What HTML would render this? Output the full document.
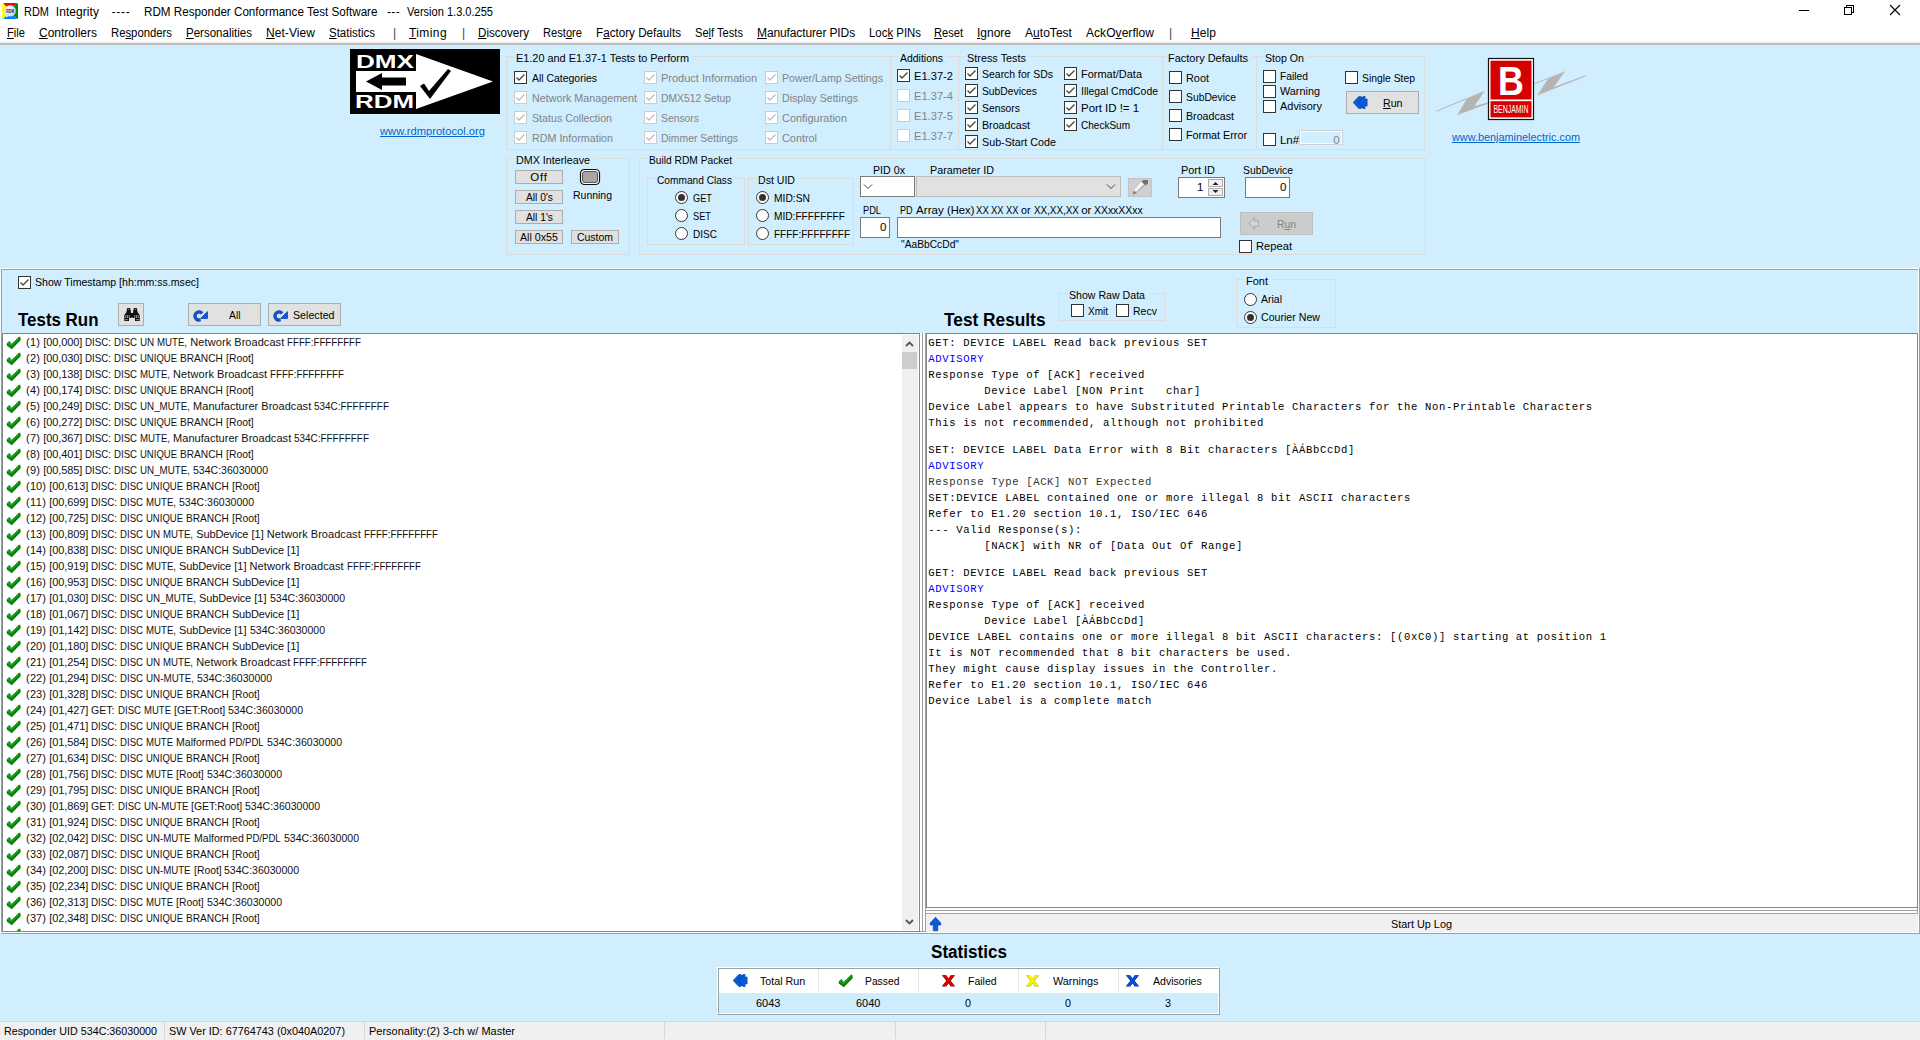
<!DOCTYPE html>
<html><head><meta charset="utf-8"><title>RDM Integrity</title>
<style>
html,body{margin:0;padding:0}
body{width:1920px;height:1040px;overflow:hidden;background:#d1eefe;position:relative;font-family:"Liberation Sans", sans-serif;font-size:11px;color:#000}
div,span.t,svg.a{position:absolute}
div{box-sizing:content-box}
span.t{white-space:pre;height:16px;line-height:16px;font-family:"Liberation Sans", sans-serif}
span.m{font-family:"Liberation Mono", monospace}
u{text-decoration:underline;text-underline-offset:1px}
</style></head><body>
<div style="left:0px;top:0px;width:1920px;height:23px;background:#fff"></div>
<svg class="a" style="left:2px;top:3px" width="16" height="16" viewBox="0 0 16 16">

<g><path d="M1 0H15L8 8Z" fill="#ff0000"/><path d="M16 1V15L8 8Z M15 0L16 1L8 8Z M15 16L16 15L8 8Z" fill="#008a00"/><path d="M15 16H1L8 8Z" fill="#0080ff"/><path d="M0 15V1L8 8Z M1 0L0 1L8 8Z M1 16L0 15L8 8Z" fill="#ffff00"/></g>
<path d="M2 9.2L4.6 14.6L8 11Z" fill="#fff"/>
<circle cx="8.2" cy="7.8" r="5.5" fill="#d4e4f6" stroke="#b4bcdc" stroke-width="0.5"/>
<ellipse cx="7" cy="5.6" rx="3.4" ry="2" fill="#f4f8fd"/>
<text x="8.2" y="10.1" font-family="Liberation Sans" font-size="5.2" font-weight="bold" text-anchor="middle" fill="#333" textLength="8" lengthAdjust="spacingAndGlyphs">RDM</text>
</svg>
<span class="t" style="left:23.5px;top:4px;font-size:12px;transform:scaleX(0.9148);transform-origin:0 50%;">RDM</span>
<span class="t" style="left:55.8px;top:4px;font-size:12px;letter-spacing:0.057px;">Integrity</span>
<span class="t" style="left:111.5px;top:4px;font-size:12px;letter-spacing:0.754px;">----</span>
<span class="t" style="left:143.5px;top:4px;font-size:12px;transform:scaleX(0.9706);transform-origin:0 50%;">RDM Responder Conformance Test Software</span>
<span class="t" style="left:387px;top:4px;font-size:12px;letter-spacing:0.333px;">---</span>
<span class="t" style="left:407px;top:4px;font-size:12px;transform:scaleX(0.9207);transform-origin:0 50%;">Version 1.3.0.255</span>
<svg class="a" style="left:1790px;top:-1px" width="130" height="23" viewBox="0 0 130 23" shape-rendering="crispEdges">
<path d="M9 11.5H19" stroke="#000" stroke-width="1" fill="none"/>
<path d="M54.5 8.5H61.5V15.5H54.5Z M56.5 8.5V6.5H63.5V13.5H61.5" stroke="#000" stroke-width="1" fill="none"/>
<path d="M100 6L110 16M110 6L100 16" stroke="#000" stroke-width="1.1" fill="none" shape-rendering="auto"/>
</svg>
<div style="left:0px;top:23px;width:1920px;height:18px;background:#fff"></div>
<div style="left:0px;top:41px;width:1920px;height:1px;background:#f4f4f4"></div>
<div style="left:0px;top:42px;width:1920px;height:1px;background:#f0f0f0"></div>
<div style="left:0px;top:43px;width:1920px;height:2px;background:#bcbcbc"></div>
<span class="t" style="left:7px;top:25px;font-size:12px;transform:scaleX(0.9298);transform-origin:0 50%;"><u>F</u>ile</span>
<span class="t" style="left:39px;top:25px;font-size:12px;"><u>C</u>ontrollers</span>
<span class="t" style="left:111px;top:25px;font-size:12px;transform:scaleX(0.9425);transform-origin:0 50%;">Re<u>s</u>ponders</span>
<span class="t" style="left:186px;top:25px;font-size:12px;transform:scaleX(0.9604);transform-origin:0 50%;"><u>P</u>ersonalities</span>
<span class="t" style="left:266px;top:25px;font-size:12px;letter-spacing:0.066px;"><u>N</u>et-View</span>
<span class="t" style="left:329px;top:25px;font-size:12px;transform:scaleX(0.9577);transform-origin:0 50%;"><u>S</u>tatistics</span>
<span class="t" style="left:393px;top:25px;font-size:12px;color:#444;">|</span>
<span class="t" style="left:409px;top:25px;font-size:12px;letter-spacing:0.404px;"><u>T</u>iming</span>
<span class="t" style="left:462px;top:25px;font-size:12px;color:#444;">|</span>
<span class="t" style="left:478px;top:25px;font-size:12px;transform:scaleX(0.9680);transform-origin:0 50%;"><u>D</u>iscovery</span>
<span class="t" style="left:543px;top:25px;font-size:12px;transform:scaleX(0.9275);transform-origin:0 50%;">Rest<u>o</u>re</span>
<span class="t" style="left:596px;top:25px;font-size:12px;transform:scaleX(0.9726);transform-origin:0 50%;">F<u>a</u>ctory Defaults</span>
<span class="t" style="left:695px;top:25px;font-size:12px;transform:scaleX(0.9261);transform-origin:0 50%;">Se<u>l</u>f Tests</span>
<span class="t" style="left:757px;top:25px;font-size:12px;letter-spacing:-0.120px;"><u>M</u>anufacturer PIDs</span>
<span class="t" style="left:869px;top:25px;font-size:12px;transform:scaleX(0.9506);transform-origin:0 50%;">Loc<u>k</u> PINs</span>
<span class="t" style="left:934px;top:25px;font-size:12px;transform:scaleX(0.9248);transform-origin:0 50%;"><u>R</u>eset</span>
<span class="t" style="left:977px;top:25px;font-size:12px;letter-spacing:-0.008px;"><u>I</u>gnore</span>
<span class="t" style="left:1025px;top:25px;font-size:12px;letter-spacing:0.035px;">A<u>u</u>toTest</span>
<span class="t" style="left:1086px;top:25px;font-size:12px;letter-spacing:0.058px;">AckO<u>v</u>erflow</span>
<span class="t" style="left:1169px;top:25px;font-size:12px;color:#444;">|</span>
<span class="t" style="left:1191px;top:25px;font-size:12px;letter-spacing:0.078px;"><u>H</u>elp</span>
<svg class="a" style="left:350px;top:49px" width="150" height="65" viewBox="0 0 150 65">
<rect width="150" height="65" fill="#000"/>
<path d="M6 22H66V5L143 32.5L66 60V43H6Z" fill="#fff"/>
<path d="M16 32.5L32 24V28.5H56V36.5H32V41Z" fill="#000"/>
<path d="M70 37L74 34.5L79 42L98 20L101 22L80 50Z" fill="#000"/>
<text x="6" y="19" font-family="Liberation Sans" font-weight="bold" font-size="17.5" fill="#fff" textLength="58" lengthAdjust="spacingAndGlyphs">DMX</text>
<text x="5" y="59" font-family="Liberation Sans" font-weight="bold" font-size="17.5" fill="#fff" textLength="59" lengthAdjust="spacingAndGlyphs">RDM</text>
</svg>
<span class="t" style="left:380px;top:123px;font-size:11.5px;color:#0066cc;transform:scaleX(0.9721);transform-origin:0 50%;text-decoration:underline;">www.rdmprotocol.org</span>
<div style="left:506px;top:56px;width:385px;height:94px;border:1px solid #dcdcdc;box-sizing:border-box"></div>
<div style="left:514px;top:56px;width:179px;height:1px;background:#d1eefe"></div>
<span class="t" style="left:516px;top:50px;font-size:11.5px;transform:scaleX(0.9473);transform-origin:0 50%;">E1.20 and E1.37-1 Tests to Perform</span>
<div style="left:514px;top:71px;width:11px;height:11px;border:1px solid #333;background:#fff"><svg width="11" height="11" viewBox="0 0 11 11" style="position:absolute;left:0;top:0"><path d="M1.5 5.5 L4 8 L9.5 2.5" fill="none" stroke="#444" stroke-width="1.3"/></svg></div>
<span class="t" style="left:532px;top:70px;font-size:11.5px;transform:scaleX(0.9079);transform-origin:0 50%;">All Categories</span>
<div style="left:514px;top:91px;width:11px;height:11px;border:1px solid #cccccc;background:#fff"><svg width="11" height="11" viewBox="0 0 11 11" style="position:absolute;left:0;top:0"><path d="M1.5 5.5 L4 8 L9.5 2.5" fill="none" stroke="#bdbdbd" stroke-width="1.3"/></svg></div>
<span class="t" style="left:532px;top:90px;font-size:11.5px;color:#838383;transform:scaleX(0.9333);transform-origin:0 50%;">Network Management</span>
<div style="left:514px;top:111px;width:11px;height:11px;border:1px solid #cccccc;background:#fff"><svg width="11" height="11" viewBox="0 0 11 11" style="position:absolute;left:0;top:0"><path d="M1.5 5.5 L4 8 L9.5 2.5" fill="none" stroke="#bdbdbd" stroke-width="1.3"/></svg></div>
<span class="t" style="left:532px;top:110px;font-size:11.5px;color:#838383;transform:scaleX(0.9270);transform-origin:0 50%;">Status Collection</span>
<div style="left:514px;top:131px;width:11px;height:11px;border:1px solid #cccccc;background:#fff"><svg width="11" height="11" viewBox="0 0 11 11" style="position:absolute;left:0;top:0"><path d="M1.5 5.5 L4 8 L9.5 2.5" fill="none" stroke="#bdbdbd" stroke-width="1.3"/></svg></div>
<span class="t" style="left:532px;top:130px;font-size:11.5px;color:#838383;transform:scaleX(0.9319);transform-origin:0 50%;">RDM Information</span>
<div style="left:644px;top:71px;width:11px;height:11px;border:1px solid #cccccc;background:#fff"><svg width="11" height="11" viewBox="0 0 11 11" style="position:absolute;left:0;top:0"><path d="M1.5 5.5 L4 8 L9.5 2.5" fill="none" stroke="#bdbdbd" stroke-width="1.3"/></svg></div>
<span class="t" style="left:661px;top:70px;font-size:11.5px;color:#838383;transform:scaleX(0.9566);transform-origin:0 50%;">Product Information</span>
<div style="left:644px;top:91px;width:11px;height:11px;border:1px solid #cccccc;background:#fff"><svg width="11" height="11" viewBox="0 0 11 11" style="position:absolute;left:0;top:0"><path d="M1.5 5.5 L4 8 L9.5 2.5" fill="none" stroke="#bdbdbd" stroke-width="1.3"/></svg></div>
<span class="t" style="left:661px;top:90px;font-size:11.5px;color:#838383;transform:scaleX(0.8974);transform-origin:0 50%;">DMX512 Setup</span>
<div style="left:644px;top:111px;width:11px;height:11px;border:1px solid #cccccc;background:#fff"><svg width="11" height="11" viewBox="0 0 11 11" style="position:absolute;left:0;top:0"><path d="M1.5 5.5 L4 8 L9.5 2.5" fill="none" stroke="#bdbdbd" stroke-width="1.3"/></svg></div>
<span class="t" style="left:661px;top:110px;font-size:11.5px;color:#838383;transform:scaleX(0.9007);transform-origin:0 50%;">Sensors</span>
<div style="left:644px;top:131px;width:11px;height:11px;border:1px solid #cccccc;background:#fff"><svg width="11" height="11" viewBox="0 0 11 11" style="position:absolute;left:0;top:0"><path d="M1.5 5.5 L4 8 L9.5 2.5" fill="none" stroke="#bdbdbd" stroke-width="1.3"/></svg></div>
<span class="t" style="left:661px;top:130px;font-size:11.5px;color:#838383;transform:scaleX(0.9059);transform-origin:0 50%;">Dimmer Settings</span>
<div style="left:765px;top:71px;width:11px;height:11px;border:1px solid #cccccc;background:#fff"><svg width="11" height="11" viewBox="0 0 11 11" style="position:absolute;left:0;top:0"><path d="M1.5 5.5 L4 8 L9.5 2.5" fill="none" stroke="#bdbdbd" stroke-width="1.3"/></svg></div>
<span class="t" style="left:782px;top:70px;font-size:11.5px;color:#838383;transform:scaleX(0.9240);transform-origin:0 50%;">Power/Lamp Settings</span>
<div style="left:765px;top:91px;width:11px;height:11px;border:1px solid #cccccc;background:#fff"><svg width="11" height="11" viewBox="0 0 11 11" style="position:absolute;left:0;top:0"><path d="M1.5 5.5 L4 8 L9.5 2.5" fill="none" stroke="#bdbdbd" stroke-width="1.3"/></svg></div>
<span class="t" style="left:782px;top:90px;font-size:11.5px;color:#838383;transform:scaleX(0.9216);transform-origin:0 50%;">Display Settings</span>
<div style="left:765px;top:111px;width:11px;height:11px;border:1px solid #cccccc;background:#fff"><svg width="11" height="11" viewBox="0 0 11 11" style="position:absolute;left:0;top:0"><path d="M1.5 5.5 L4 8 L9.5 2.5" fill="none" stroke="#bdbdbd" stroke-width="1.3"/></svg></div>
<span class="t" style="left:782px;top:110px;font-size:11.5px;color:#838383;transform:scaleX(0.9502);transform-origin:0 50%;">Configuration</span>
<div style="left:765px;top:131px;width:11px;height:11px;border:1px solid #cccccc;background:#fff"><svg width="11" height="11" viewBox="0 0 11 11" style="position:absolute;left:0;top:0"><path d="M1.5 5.5 L4 8 L9.5 2.5" fill="none" stroke="#bdbdbd" stroke-width="1.3"/></svg></div>
<span class="t" style="left:782px;top:130px;font-size:11.5px;color:#838383;transform:scaleX(0.9440);transform-origin:0 50%;">Control</span>
<div style="left:890px;top:56px;width:69px;height:94px;border:1px solid #dcdcdc;box-sizing:border-box"></div>
<div style="left:898px;top:56px;width:49px;height:1px;background:#d1eefe"></div>
<span class="t" style="left:900px;top:50px;font-size:11.5px;transform:scaleX(0.9089);transform-origin:0 50%;">Additions</span>
<div style="left:897px;top:69px;width:11px;height:11px;border:1px solid #333;background:#fff"><svg width="11" height="11" viewBox="0 0 11 11" style="position:absolute;left:0;top:0"><path d="M1.5 5.5 L4 8 L9.5 2.5" fill="none" stroke="#444" stroke-width="1.3"/></svg></div>
<span class="t" style="left:914px;top:68px;font-size:11.5px;transform:scaleX(0.9682);transform-origin:0 50%;">E1.37-2</span>
<div style="left:897px;top:89px;width:11px;height:11px;border:1px solid #cccccc;background:#fff"></div>
<span class="t" style="left:914px;top:88px;font-size:11.5px;color:#838383;transform:scaleX(0.9682);transform-origin:0 50%;">E1.37-4</span>
<div style="left:897px;top:109px;width:11px;height:11px;border:1px solid #cccccc;background:#fff"></div>
<span class="t" style="left:914px;top:108px;font-size:11.5px;color:#838383;transform:scaleX(0.9682);transform-origin:0 50%;">E1.37-5</span>
<div style="left:897px;top:129px;width:11px;height:11px;border:1px solid #cccccc;background:#fff"></div>
<span class="t" style="left:914px;top:128px;font-size:11.5px;color:#838383;transform:scaleX(0.9682);transform-origin:0 50%;">E1.37-7</span>
<div style="left:958px;top:56px;width:205px;height:94px;border:1px solid #dcdcdc;box-sizing:border-box"></div>
<div style="left:965px;top:56px;width:65px;height:1px;background:#d1eefe"></div>
<span class="t" style="left:967px;top:50px;font-size:11.5px;transform:scaleX(0.9452);transform-origin:0 50%;">Stress Tests</span>
<div style="left:965px;top:67px;width:11px;height:11px;border:1px solid #333;background:#fff"><svg width="11" height="11" viewBox="0 0 11 11" style="position:absolute;left:0;top:0"><path d="M1.5 5.5 L4 8 L9.5 2.5" fill="none" stroke="#444" stroke-width="1.3"/></svg></div>
<span class="t" style="left:982px;top:66px;font-size:11.5px;transform:scaleX(0.9104);transform-origin:0 50%;">Search for SDs</span>
<div style="left:965px;top:84px;width:11px;height:11px;border:1px solid #333;background:#fff"><svg width="11" height="11" viewBox="0 0 11 11" style="position:absolute;left:0;top:0"><path d="M1.5 5.5 L4 8 L9.5 2.5" fill="none" stroke="#444" stroke-width="1.3"/></svg></div>
<span class="t" style="left:982px;top:83px;font-size:11.5px;transform:scaleX(0.8961);transform-origin:0 50%;">SubDevices</span>
<div style="left:965px;top:101px;width:11px;height:11px;border:1px solid #333;background:#fff"><svg width="11" height="11" viewBox="0 0 11 11" style="position:absolute;left:0;top:0"><path d="M1.5 5.5 L4 8 L9.5 2.5" fill="none" stroke="#444" stroke-width="1.3"/></svg></div>
<span class="t" style="left:982px;top:100px;font-size:11.5px;transform:scaleX(0.9007);transform-origin:0 50%;">Sensors</span>
<div style="left:965px;top:118px;width:11px;height:11px;border:1px solid #333;background:#fff"><svg width="11" height="11" viewBox="0 0 11 11" style="position:absolute;left:0;top:0"><path d="M1.5 5.5 L4 8 L9.5 2.5" fill="none" stroke="#444" stroke-width="1.3"/></svg></div>
<span class="t" style="left:982px;top:117px;font-size:11.5px;transform:scaleX(0.9270);transform-origin:0 50%;">Broadcast</span>
<div style="left:965px;top:135px;width:11px;height:11px;border:1px solid #333;background:#fff"><svg width="11" height="11" viewBox="0 0 11 11" style="position:absolute;left:0;top:0"><path d="M1.5 5.5 L4 8 L9.5 2.5" fill="none" stroke="#444" stroke-width="1.3"/></svg></div>
<span class="t" style="left:982px;top:134px;font-size:11.5px;transform:scaleX(0.9336);transform-origin:0 50%;">Sub-Start Code</span>
<div style="left:1064px;top:67px;width:11px;height:11px;border:1px solid #333;background:#fff"><svg width="11" height="11" viewBox="0 0 11 11" style="position:absolute;left:0;top:0"><path d="M1.5 5.5 L4 8 L9.5 2.5" fill="none" stroke="#444" stroke-width="1.3"/></svg></div>
<span class="t" style="left:1081px;top:66px;font-size:11.5px;transform:scaleX(0.9543);transform-origin:0 50%;">Format/Data</span>
<div style="left:1064px;top:84px;width:11px;height:11px;border:1px solid #333;background:#fff"><svg width="11" height="11" viewBox="0 0 11 11" style="position:absolute;left:0;top:0"><path d="M1.5 5.5 L4 8 L9.5 2.5" fill="none" stroke="#444" stroke-width="1.3"/></svg></div>
<span class="t" style="left:1081px;top:83px;font-size:11.5px;transform:scaleX(0.9057);transform-origin:0 50%;">Illegal CmdCode</span>
<div style="left:1064px;top:101px;width:11px;height:11px;border:1px solid #333;background:#fff"><svg width="11" height="11" viewBox="0 0 11 11" style="position:absolute;left:0;top:0"><path d="M1.5 5.5 L4 8 L9.5 2.5" fill="none" stroke="#444" stroke-width="1.3"/></svg></div>
<span class="t" style="left:1081px;top:100px;font-size:11.5px;letter-spacing:-0.040px;">Port ID != 1</span>
<div style="left:1064px;top:118px;width:11px;height:11px;border:1px solid #333;background:#fff"><svg width="11" height="11" viewBox="0 0 11 11" style="position:absolute;left:0;top:0"><path d="M1.5 5.5 L4 8 L9.5 2.5" fill="none" stroke="#444" stroke-width="1.3"/></svg></div>
<span class="t" style="left:1081px;top:117px;font-size:11.5px;transform:scaleX(0.8711);transform-origin:0 50%;">CheckSum</span>
<div style="left:1162px;top:56px;width:95px;height:94px;border:1px solid #dcdcdc;box-sizing:border-box"></div>
<div style="left:1166px;top:56px;width:86px;height:1px;background:#d1eefe"></div>
<span class="t" style="left:1168px;top:50px;font-size:11.5px;transform:scaleX(0.9554);transform-origin:0 50%;">Factory Defaults</span>
<div style="left:1169px;top:71px;width:11px;height:11px;border:1px solid #333;background:#fff"></div>
<span class="t" style="left:1186px;top:70px;font-size:11.5px;transform:scaleX(0.9466);transform-origin:0 50%;">Root</span>
<div style="left:1169px;top:90px;width:11px;height:11px;border:1px solid #333;background:#fff"></div>
<span class="t" style="left:1186px;top:89px;font-size:11.5px;transform:scaleX(0.8989);transform-origin:0 50%;">SubDevice</span>
<div style="left:1169px;top:109px;width:11px;height:11px;border:1px solid #333;background:#fff"></div>
<span class="t" style="left:1186px;top:108px;font-size:11.5px;transform:scaleX(0.9270);transform-origin:0 50%;">Broadcast</span>
<div style="left:1169px;top:128px;width:11px;height:11px;border:1px solid #333;background:#fff"></div>
<span class="t" style="left:1186px;top:127px;font-size:11.5px;transform:scaleX(0.9360);transform-origin:0 50%;">Format Error</span>
<div style="left:1256px;top:56px;width:169px;height:94px;border:1px solid #dcdcdc;box-sizing:border-box"></div>
<div style="left:1263px;top:56px;width:45px;height:1px;background:#d1eefe"></div>
<span class="t" style="left:1265px;top:50px;font-size:11.5px;transform:scaleX(0.9241);transform-origin:0 50%;">Stop On</span>
<div style="left:1263px;top:70px;width:11px;height:11px;border:1px solid #333;background:#fff"></div>
<span class="t" style="left:1280px;top:68px;font-size:11.5px;transform:scaleX(0.8938);transform-origin:0 50%;">Failed</span>
<div style="left:1263px;top:85px;width:11px;height:11px;border:1px solid #333;background:#fff"></div>
<span class="t" style="left:1280px;top:83px;font-size:11.5px;transform:scaleX(0.9433);transform-origin:0 50%;">Warning</span>
<div style="left:1263px;top:100px;width:11px;height:11px;border:1px solid #333;background:#fff"></div>
<span class="t" style="left:1280px;top:98px;font-size:11.5px;transform:scaleX(0.9522);transform-origin:0 50%;">Advisory</span>
<div style="left:1263px;top:133px;width:11px;height:11px;border:1px solid #333;background:#fff"></div>
<span class="t" style="left:1280px;top:131.5px;font-size:11.5px;letter-spacing:-0.062px;">Ln#</span>
<div style="left:1299px;top:130px;width:44px;height:15px;background:#d1eefe;border:1px solid #d2d2d2;box-shadow:inset 0 0 0 1px #fff;box-sizing:border-box"></div>
<span class="t" style="left:1333.3px;top:131.5px;font-size:11.5px;color:#838383;">0</span>
<div style="left:1345px;top:71px;width:11px;height:11px;border:1px solid #333;background:#fff"></div>
<span class="t" style="left:1362px;top:69.5px;font-size:11.5px;transform:scaleX(0.9009);transform-origin:0 50%;">Single Step</span>
<div style="left:1346px;top:91px;width:73px;height:23px;background:#e1e1e1;border:1px solid #adadad;box-sizing:border-box"></div>
<svg class="a" style="left:1353px;top:96px" width="15" height="13" viewBox="0 0 15 13"><path d="M0 6.5L6 0.2H7.9L9.1 2.1L10.3 0.2H12.1V3H14.2V10H12.1V12.8H10.3L9.1 10.9L7.9 12.8H6Z" fill="#0a5ad8" stroke="#0a3cb4" stroke-width="0.5"/><path d="M10.3 0.8L4.8 6.5L10.3 12.2" fill="none" stroke="#0a3cb4" stroke-width="0.9"/></svg>
<span class="t" style="left:1383.3px;top:95px;font-size:11.5px;transform:scaleX(0.9238);transform-origin:0 50%;"><u>R</u>un</span>
<svg class="a" style="left:1434px;top:56px" width="156" height="68" viewBox="0 0 156 68">
<path d="M2.4 55.1L51 34.5L40.5 50.3L53.7 46.8L55 47.6L23 59.3L32.5 42.9Z" fill="#b4b4b4" stroke="#e4e4e4" stroke-width="0.5" stroke-dasharray="1.5 1"/>
<path d="M100.2 27.6L131.4 14.9L119.8 31.3L151.5 19.5L151.8 20.3L102.9 39.8L114 22.8Z" fill="#b4b4b4" stroke="#e4e4e4" stroke-width="0.5" stroke-dasharray="1.5 1"/>
<path d="M2.4 55.3L32.5 42.7M40.5 50.6L54 47M100.2 27.8L114 22.4M119.8 31.6L151.5 19.9" fill="none" stroke="#b4b4b4" stroke-width="0.9"/>
<rect x="54.5" y="2.5" width="45" height="61" fill="#fff" stroke="#111" stroke-width="1.2"/>
<rect x="56.5" y="4.7" width="41" height="38.8" fill="#d60000"/>
<rect x="56.5" y="45.2" width="41" height="16.2" fill="#d60000"/>
<text transform="translate(77,38.8) scale(0.885,1)" font-family="Liberation Sans" font-weight="bold" font-size="40.5" fill="#fff" text-anchor="middle">B</text>
<text x="59.5" y="56.8" font-family="Liberation Sans" font-size="10.2" fill="#fff" textLength="35" lengthAdjust="spacingAndGlyphs">BENJAMIN</text>
</svg>
<span class="t" style="left:1452px;top:129px;font-size:11.5px;color:#0066cc;transform:scaleX(0.9446);transform-origin:0 50%;text-decoration:underline;">www.benjaminelectric.com</span>
<div style="left:506px;top:158px;width:124px;height:97px;border:1px solid #dcdcdc;box-sizing:border-box"></div>
<div style="left:514px;top:158px;width:80px;height:1px;background:#d1eefe"></div>
<span class="t" style="left:516px;top:152px;font-size:11.5px;transform:scaleX(0.9336);transform-origin:0 50%;">DMX Interleave</span>
<div style="left:515px;top:170px;width:48px;height:14px;background:#e1e1e1;border:1px solid #adadad;box-sizing:border-box"></div>
<span class="t" style="left:530.25px;top:169.0px;font-size:11.5px;letter-spacing:0.786px;">Off</span>
<div style="left:515px;top:190px;width:48px;height:14px;background:#e1e1e1;border:1px solid #adadad;box-sizing:border-box"></div>
<span class="t" style="left:525.5px;top:189.0px;font-size:11.5px;transform:scaleX(0.8903);transform-origin:0 50%;">All 0&#x27;s</span>
<div style="left:515px;top:210px;width:48px;height:14px;background:#e1e1e1;border:1px solid #adadad;box-sizing:border-box"></div>
<span class="t" style="left:525.5px;top:209.0px;font-size:11.5px;transform:scaleX(0.8903);transform-origin:0 50%;">All 1&#x27;s</span>
<div style="left:515px;top:230px;width:48px;height:14px;background:#e1e1e1;border:1px solid #adadad;box-sizing:border-box"></div>
<span class="t" style="left:520.0px;top:229.0px;font-size:11.5px;transform:scaleX(0.9286);transform-origin:0 50%;">All 0x55</span>
<div style="left:571px;top:230px;width:48px;height:14px;background:#e1e1e1;border:1px solid #adadad;box-sizing:border-box"></div>
<span class="t" style="left:577.0px;top:229.0px;font-size:11.5px;transform:scaleX(0.9085);transform-origin:0 50%;">Custom</span>
<svg class="a" style="left:579px;top:168px" width="22" height="18" viewBox="0 0 22 18">
<rect x="1.5" y="1.5" width="19" height="15" rx="4" ry="4" fill="#fff" stroke="#111" stroke-width="1.2"/>
<rect x="3.5" y="3.5" width="15" height="11" rx="2.5" ry="2.5" fill="#a6a6a6" stroke="#555" stroke-width="1"/>
</svg>
<span class="t" style="left:573px;top:187px;font-size:11.5px;transform:scaleX(0.9103);transform-origin:0 50%;">Running</span>
<div style="left:639px;top:158px;width:787px;height:97px;border:1px solid #dcdcdc;box-sizing:border-box"></div>
<div style="left:647px;top:158px;width:89px;height:1px;background:#d1eefe"></div>
<span class="t" style="left:649px;top:152px;font-size:11.5px;transform:scaleX(0.8895);transform-origin:0 50%;">Build RDM Packet</span>
<div style="left:647px;top:178px;width:98px;height:67px;border:1px solid #dcdcdc;box-sizing:border-box"></div>
<div style="left:655px;top:178px;width:81px;height:1px;background:#d1eefe"></div>
<span class="t" style="left:657px;top:172px;font-size:11.5px;transform:scaleX(0.8824);transform-origin:0 50%;">Command Class</span>
<div style="left:675px;top:191.0px;width:11px;height:11px;border:1px solid #333;border-radius:50%;background:#fff"><div style="left:2px;top:2px;width:7px;height:7px;border-radius:50%;background:#333"></div></div>
<span class="t" style="left:692.6px;top:189.5px;font-size:11.5px;transform:scaleX(0.8037);transform-origin:0 50%;">GET</span>
<div style="left:675px;top:209.0px;width:11px;height:11px;border:1px solid #333;border-radius:50%;background:#fff"></div>
<span class="t" style="left:692.6px;top:207.5px;font-size:11.5px;transform:scaleX(0.8045);transform-origin:0 50%;">SET</span>
<div style="left:675px;top:227.0px;width:11px;height:11px;border:1px solid #333;border-radius:50%;background:#fff"></div>
<span class="t" style="left:692.6px;top:225.5px;font-size:11.5px;transform:scaleX(0.8732);transform-origin:0 50%;">DISC</span>
<div style="left:748px;top:178px;width:106px;height:67px;border:1px solid #dcdcdc;box-sizing:border-box"></div>
<div style="left:756px;top:178px;width:43px;height:1px;background:#d1eefe"></div>
<span class="t" style="left:758px;top:172px;font-size:11.5px;transform:scaleX(0.9193);transform-origin:0 50%;">Dst UID</span>
<div style="left:756px;top:191.0px;width:11px;height:11px;border:1px solid #333;border-radius:50%;background:#fff"><div style="left:2px;top:2px;width:7px;height:7px;border-radius:50%;background:#333"></div></div>
<span class="t" style="left:773.7px;top:189.5px;font-size:11.5px;transform:scaleX(0.8944);transform-origin:0 50%;">MID:SN</span>
<div style="left:756px;top:209.0px;width:11px;height:11px;border:1px solid #333;border-radius:50%;background:#fff"></div>
<span class="t" style="left:773.7px;top:207.5px;font-size:11.5px;transform:scaleX(0.8822);transform-origin:0 50%;">MID:FFFFFFFF</span>
<div style="left:756px;top:227.0px;width:11px;height:11px;border:1px solid #333;border-radius:50%;background:#fff"></div>
<span class="t" style="left:773.7px;top:225.5px;font-size:11.5px;transform:scaleX(0.8686);transform-origin:0 50%;">FFFF:FFFFFFFF</span>
<span class="t" style="left:873px;top:162px;font-size:11.5px;transform:scaleX(0.9271);transform-origin:0 50%;">PID 0x</span>
<div style="left:860px;top:176px;width:55px;height:21px;background:#fff;border:1px solid #7a7a7a;box-sizing:border-box"></div>
<svg class="a" style="left:863px;top:183px" width="10" height="7" viewBox="0 0 10 7"><path d="M1 1.5L5 5.5L9 1.5" fill="none" stroke="#444" stroke-width="1"/></svg>
<span class="t" style="left:930px;top:162px;font-size:11.5px;transform:scaleX(0.9358);transform-origin:0 50%;">Parameter ID</span>
<div style="left:916px;top:176px;width:205px;height:21px;background:#e1e1e1;border:1px solid #bcbcbc;box-sizing:border-box"></div>
<svg class="a" style="left:1106px;top:183px" width="10" height="7" viewBox="0 0 10 7"><path d="M1 1.5L5 5.5L9 1.5" fill="none" stroke="#444" stroke-width="1"/></svg>
<div style="left:1128px;top:178px;width:24px;height:19px;background:#cfcfcf;border:1px solid #c4c4c4;box-sizing:border-box"></div>
<svg class="a" style="left:1131px;top:179px" width="19" height="17" viewBox="0 0 19 17">
<path d="M3 11.5L10.5 2.5L14.5 6.5L6 14Z" fill="#f6f6f6"/>
<path d="M6 14L14.5 6.5L13 5.3L4.8 13Z" fill="#b4b4b4"/>
<path d="M1.3 15.7L3 11.5L6 14Z" fill="#808080"/>
<path d="M10.5 2.5L12.5 1H17V4.6L14.5 6.5Z" fill="#707070"/>
</svg>
<span class="t" style="left:1181px;top:162px;font-size:11.5px;transform:scaleX(0.9498);transform-origin:0 50%;">Port ID</span>
<div style="left:1178px;top:177px;width:47px;height:21px;background:#fff;border:1px solid #7a7a7a;box-sizing:border-box"></div>
<span class="t" style="left:1197px;top:179px;font-size:11.5px;">1</span>
<div style="left:1208px;top:179px;width:15px;height:8px;background:#f0f0f0;border:1px solid #adadad;box-sizing:border-box"></div>
<div style="left:1208px;top:188px;width:15px;height:8px;background:#f0f0f0;border:1px solid #adadad;box-sizing:border-box"></div>
<svg class="a" style="left:1212px;top:181px" width="7" height="13" viewBox="0 0 7 13"><path d="M0.5 4L3.5 1L6.5 4Z M0.5 9L3.5 12L6.5 9Z" fill="#222"/></svg>
<span class="t" style="left:1242.5px;top:162px;font-size:11.5px;transform:scaleX(0.8989);transform-origin:0 50%;">SubDevice</span>
<div style="left:1245px;top:177px;width:45px;height:21px;background:#fff;border:1px solid #7a7a7a;box-sizing:border-box"></div>
<span class="t" style="left:1280px;top:179px;font-size:11.5px;">0</span>
<span class="t" style="left:863px;top:202px;font-size:11.5px;transform:scaleX(0.8045);transform-origin:0 50%;">PDL</span>
<div style="left:860px;top:217px;width:30px;height:21px;background:#fff;border:1px solid #7a7a7a;box-sizing:border-box"></div>
<span class="t" style="left:880px;top:219px;font-size:11.5px;">0</span>
<span class="t" style="left:899.8px;top:202px;font-size:11.5px;transform:scaleX(0.7945);transform-origin:0 50%;">PD</span>
<span class="t" style="left:916.1px;top:202px;font-size:11.5px;letter-spacing:0.023px;">Array</span>
<span class="t" style="left:946.5px;top:202px;font-size:11.5px;transform:scaleX(0.9742);transform-origin:0 50%;">(Hex)</span>
<span class="t" style="left:976.0px;top:202px;font-size:11.5px;transform:scaleX(0.8342);transform-origin:0 50%;">XX</span>
<span class="t" style="left:991.1999999999999px;top:202px;font-size:11.5px;transform:scaleX(0.8212);transform-origin:0 50%;">XX</span>
<span class="t" style="left:1006.1px;top:202px;font-size:11.5px;transform:scaleX(0.8147);transform-origin:0 50%;">XX</span>
<span class="t" style="left:1021.4px;top:202px;font-size:11.5px;transform:scaleX(0.9380);transform-origin:0 50%;">or</span>
<span class="t" style="left:1033.9px;top:202px;font-size:11.5px;transform:scaleX(0.8546);transform-origin:0 50%;">XX,XX,XX</span>
<span class="t" style="left:1081.3000000000002px;top:202px;font-size:11.5px;letter-spacing:-0.117px;">or</span>
<span class="t" style="left:1094.1000000000001px;top:202px;font-size:11.5px;transform:scaleX(0.9052);transform-origin:0 50%;">XXxxXXxx</span>
<div style="left:897px;top:217px;width:324px;height:21px;background:#fff;border:1px solid #7a7a7a;box-sizing:border-box"></div>
<span class="t" style="left:901px;top:236px;font-size:11.5px;transform:scaleX(0.8915);transform-origin:0 50%;">&quot;AaBbCcDd&quot;</span>
<div style="left:1240px;top:212px;width:73px;height:23px;background:#cccccc;border:1px solid #bfbfbf;box-sizing:border-box"></div>
<svg class="a" style="left:1248px;top:216px" width="12" height="15" viewBox="0 0 12 15"><path d="M1 7.5L6.5 1.5V5H10.5V10H6.5V13.5Z" fill="#d4d4d4" stroke="#a8a8a8" stroke-width="1"/></svg>
<span class="t" style="left:1277px;top:216px;font-size:11.5px;color:#838383;transform:scaleX(0.8994);transform-origin:0 50%;">R<u>u</u>n</span>
<div style="left:1239px;top:240px;width:11px;height:11px;border:1px solid #333;background:#fff"></div>
<span class="t" style="left:1256px;top:238px;font-size:11.5px;transform:scaleX(0.9705);transform-origin:0 50%;">Repeat</span>
<div style="left:0px;top:268px;width:1919px;height:1px;background:#fff"></div>
<div style="left:0px;top:268px;width:1px;height:666px;background:#f4fbff"></div>
<div style="left:1px;top:269px;width:1917px;height:1px;background:#a0a0a0"></div>
<div style="left:1px;top:269px;width:1px;height:665px;background:#a0a0a0"></div>
<div style="left:1918px;top:268px;width:1px;height:665px;background:#fff"></div>
<div style="left:1919px;top:268px;width:1px;height:666px;background:#a0a0a0"></div>
<div style="left:1px;top:932px;width:1918px;height:1px;background:#fff"></div>
<div style="left:1px;top:933px;width:1919px;height:1px;background:#a0a0a0"></div>
<div style="left:18px;top:276px;width:11px;height:11px;border:1px solid #333;background:#fff"><svg width="11" height="11" viewBox="0 0 11 11" style="position:absolute;left:0;top:0"><path d="M1.5 5.5 L4 8 L9.5 2.5" fill="none" stroke="#444" stroke-width="1.3"/></svg></div>
<span class="t" style="left:35px;top:274px;font-size:11.5px;transform:scaleX(0.9198);transform-origin:0 50%;">Show Timestamp [hh:mm:ss.msec]</span>
<span class="t" style="left:18.3px;top:311.6px;font-size:18px;font-weight:bold;transform:scaleX(0.9395);transform-origin:0 50%;">Tests Run</span>
<div style="left:118px;top:303px;width:26px;height:23px;background:#e1e1e1;border:1px solid #adadad;box-sizing:border-box"></div>
<svg class="a" style="left:124px;top:308px" width="16" height="13" viewBox="0 0 16 13">
<g fill="#111"><path d="M3 0H6.3V2H6.8V4L7.6 6.5V10H5V13H0.3V7L2.6 4V2H3Z"/><path d="M13 0H9.7V2H9.2V4L8.4 6.5V10H11V13H15.7V7L13.4 4V2H13Z"/><rect x="7" y="5" width="2" height="4"/></g>
<g fill="#8c8c8c"><rect x="1.3" y="7" width="1" height="3"/><rect x="3" y="7" width="1" height="3"/><rect x="4.7" y="7" width="1" height="3"/><rect x="10.3" y="7" width="1" height="3"/><rect x="12" y="7" width="1" height="3"/><rect x="13.7" y="7" width="1" height="3"/>
<rect x="1.3" y="11" width="2.4" height="1.2"/><rect x="12.3" y="11" width="2.4" height="1.2"/><rect x="3.8" y="0.8" width="1.4" height="1"/><rect x="10.8" y="0.8" width="1.4" height="1"/></g>
</svg>
<div style="left:188px;top:303px;width:73px;height:23px;background:#e1e1e1;border:1px solid #adadad;box-sizing:border-box"></div>
<svg class="a" style="left:193px;top:309.5px" width="15" height="12" viewBox="-0.5 -0.5 15 12"><path d="M6.9 9.3A4 4 0 1 1 8.6 2.9" fill="none" stroke="#0a3cb4" stroke-width="3.2"/><path d="M6.9 9.3A4 4 0 1 1 8.6 2.9" fill="none" stroke="#0a5ad8" stroke-width="2"/><path d="M14 1V8H7Z" fill="#0a5ad8" stroke="#0a3cb4" stroke-width="0.7"/></svg>
<span class="t" style="left:228.5px;top:307px;font-size:11.5px;transform:scaleX(0.8998);transform-origin:0 50%;">All</span>
<div style="left:268px;top:303px;width:73px;height:23px;background:#e1e1e1;border:1px solid #adadad;box-sizing:border-box"></div>
<svg class="a" style="left:273px;top:309.5px" width="15" height="12" viewBox="-0.5 -0.5 15 12"><path d="M6.9 9.3A4 4 0 1 1 8.6 2.9" fill="none" stroke="#0a3cb4" stroke-width="3.2"/><path d="M6.9 9.3A4 4 0 1 1 8.6 2.9" fill="none" stroke="#0a5ad8" stroke-width="2"/><path d="M14 1V8H7Z" fill="#0a5ad8" stroke="#0a3cb4" stroke-width="0.7"/></svg>
<span class="t" style="left:293.3px;top:307px;font-size:11.5px;transform:scaleX(0.9271);transform-origin:0 50%;">Selected</span>
<span class="t" style="left:944.3px;top:311.6px;font-size:18px;font-weight:bold;transform:scaleX(0.9602);transform-origin:0 50%;">Test Results</span>
<div style="left:1059px;top:293px;width:106px;height:28px;border:1px solid #dcdcdc;box-sizing:border-box"></div>
<div style="left:1067px;top:293px;width:82px;height:1px;background:#d1eefe"></div>
<span class="t" style="left:1069px;top:287px;font-size:11.5px;transform:scaleX(0.9216);transform-origin:0 50%;">Show Raw Data</span>
<div style="left:1071px;top:304px;width:11px;height:11px;border:1px solid #333;background:#fff"></div>
<span class="t" style="left:1088px;top:303px;font-size:11.5px;transform:scaleX(0.8696);transform-origin:0 50%;">Xmit</span>
<div style="left:1116px;top:304px;width:11px;height:11px;border:1px solid #333;background:#fff"></div>
<span class="t" style="left:1133px;top:303px;font-size:11.5px;transform:scaleX(0.9159);transform-origin:0 50%;">Recv</span>
<div style="left:1236px;top:279px;width:100px;height:49px;border:1px solid #dcdcdc;box-sizing:border-box"></div>
<div style="left:1244px;top:279px;width:28px;height:1px;background:#d1eefe"></div>
<span class="t" style="left:1246px;top:273px;font-size:11.5px;transform:scaleX(0.9559);transform-origin:0 50%;">Font</span>
<div style="left:1244px;top:292.5px;width:11px;height:11px;border:1px solid #333;border-radius:50%;background:#fff"></div>
<span class="t" style="left:1261px;top:291px;font-size:11.5px;transform:scaleX(0.9124);transform-origin:0 50%;">Arial</span>
<div style="left:1244px;top:310.5px;width:11px;height:11px;border:1px solid #333;border-radius:50%;background:#fff"><div style="left:2px;top:2px;width:7px;height:7px;border-radius:50%;background:#333"></div></div>
<span class="t" style="left:1261px;top:309px;font-size:11.5px;transform:scaleX(0.9230);transform-origin:0 50%;">Courier New</span>
<div style="left:2px;top:333px;width:918px;height:599px;background:#fff;border:1px solid #828790;box-sizing:border-box"></div>
<svg class="a" style="left:6px;top:336px" width="15" height="14" viewBox="0 0 15 14"><path d="M0.8 7.6L3.2 4.9L5.6 7.9L13.2 0.4L14.6 1.6L14.6 4.2L5.8 13.2L0.8 9.6Z" fill="#0a7a0a"/><path d="M1.2 7.4L3.2 5.2L5.6 8.2L13.2 0.8L14.2 1.8L5.7 10.6Z" fill="#12a812"/></svg>
<span class="t" style="left:26.12px;top:334px;font-size:11px;color:#111;letter-spacing:0.182px;">(1)</span>
<span class="t" style="left:43.22px;top:334px;font-size:11px;color:#111;letter-spacing:-0.096px;">[00,000]</span>
<span class="t" style="left:85.05px;top:334px;font-size:11px;color:#111;transform:scaleX(0.8860);transform-origin:0 50%;">DISC:</span>
<span class="t" style="left:114.05px;top:334px;font-size:11px;color:#111;transform:scaleX(0.8751);transform-origin:0 50%;">DISC</span>
<span class="t" style="left:140.1px;top:334px;font-size:11px;color:#111;transform:scaleX(0.8936);transform-origin:0 50%;">UN</span>
<span class="t" style="left:157.25px;top:334px;font-size:11px;color:#111;transform:scaleX(0.8763);transform-origin:0 50%;">MUTE,</span>
<span class="t" style="left:190.25px;top:334px;font-size:11px;color:#111;letter-spacing:0.094px;">Network</span>
<span class="t" style="left:234.25px;top:334px;font-size:11px;color:#111;letter-spacing:0.052px;">Broadcast</span>
<span class="t" style="left:287.3px;top:334px;font-size:11px;color:#111;transform:scaleX(0.8842);transform-origin:0 50%;">FFFF:FFFFFFFF</span>
<svg class="a" style="left:6px;top:352px" width="15" height="14" viewBox="0 0 15 14"><path d="M0.8 7.6L3.2 4.9L5.6 7.9L13.2 0.4L14.6 1.6L14.6 4.2L5.8 13.2L0.8 9.6Z" fill="#0a7a0a"/><path d="M1.2 7.4L3.2 5.2L5.6 8.2L13.2 0.8L14.2 1.8L5.7 10.6Z" fill="#12a812"/></svg>
<span class="t" style="left:26.12px;top:350px;font-size:11px;color:#111;letter-spacing:0.182px;">(2)</span>
<span class="t" style="left:43.22px;top:350px;font-size:11px;color:#111;letter-spacing:-0.096px;">[00,030]</span>
<span class="t" style="left:85.05px;top:350px;font-size:11px;color:#111;transform:scaleX(0.8860);transform-origin:0 50%;">DISC:</span>
<span class="t" style="left:114.05px;top:350px;font-size:11px;color:#111;transform:scaleX(0.8751);transform-origin:0 50%;">DISC</span>
<span class="t" style="left:140.1px;top:350px;font-size:11px;color:#111;transform:scaleX(0.8649);transform-origin:0 50%;">UNIQUE</span>
<span class="t" style="left:180.05px;top:350px;font-size:11px;color:#111;transform:scaleX(0.9214);transform-origin:0 50%;">BRANCH</span>
<span class="t" style="left:226.02px;top:350px;font-size:11px;color:#111;transform:scaleX(0.9435);transform-origin:0 50%;">[Root]</span>
<svg class="a" style="left:6px;top:368px" width="15" height="14" viewBox="0 0 15 14"><path d="M0.8 7.6L3.2 4.9L5.6 7.9L13.2 0.4L14.6 1.6L14.6 4.2L5.8 13.2L0.8 9.6Z" fill="#0a7a0a"/><path d="M1.2 7.4L3.2 5.2L5.6 8.2L13.2 0.8L14.2 1.8L5.7 10.6Z" fill="#12a812"/></svg>
<span class="t" style="left:26.12px;top:366px;font-size:11px;color:#111;letter-spacing:0.182px;">(3)</span>
<span class="t" style="left:43.22px;top:366px;font-size:11px;color:#111;letter-spacing:-0.096px;">[00,138]</span>
<span class="t" style="left:85.05px;top:366px;font-size:11px;color:#111;transform:scaleX(0.8860);transform-origin:0 50%;">DISC:</span>
<span class="t" style="left:114.05px;top:366px;font-size:11px;color:#111;transform:scaleX(0.8751);transform-origin:0 50%;">DISC</span>
<span class="t" style="left:140.05px;top:366px;font-size:11px;color:#111;transform:scaleX(0.8763);transform-origin:0 50%;">MUTE,</span>
<span class="t" style="left:173.05px;top:366px;font-size:11px;color:#111;letter-spacing:0.094px;">Network</span>
<span class="t" style="left:217.05px;top:366px;font-size:11px;color:#111;letter-spacing:0.052px;">Broadcast</span>
<span class="t" style="left:270.1px;top:366px;font-size:11px;color:#111;transform:scaleX(0.8842);transform-origin:0 50%;">FFFF:FFFFFFFF</span>
<svg class="a" style="left:6px;top:384px" width="15" height="14" viewBox="0 0 15 14"><path d="M0.8 7.6L3.2 4.9L5.6 7.9L13.2 0.4L14.6 1.6L14.6 4.2L5.8 13.2L0.8 9.6Z" fill="#0a7a0a"/><path d="M1.2 7.4L3.2 5.2L5.6 8.2L13.2 0.8L14.2 1.8L5.7 10.6Z" fill="#12a812"/></svg>
<span class="t" style="left:26.12px;top:382px;font-size:11px;color:#111;letter-spacing:0.182px;">(4)</span>
<span class="t" style="left:43.22px;top:382px;font-size:11px;color:#111;letter-spacing:-0.096px;">[00,174]</span>
<span class="t" style="left:85.05px;top:382px;font-size:11px;color:#111;transform:scaleX(0.8860);transform-origin:0 50%;">DISC:</span>
<span class="t" style="left:114.05px;top:382px;font-size:11px;color:#111;transform:scaleX(0.8751);transform-origin:0 50%;">DISC</span>
<span class="t" style="left:140.1px;top:382px;font-size:11px;color:#111;transform:scaleX(0.8649);transform-origin:0 50%;">UNIQUE</span>
<span class="t" style="left:180.05px;top:382px;font-size:11px;color:#111;transform:scaleX(0.9214);transform-origin:0 50%;">BRANCH</span>
<span class="t" style="left:226.02px;top:382px;font-size:11px;color:#111;transform:scaleX(0.9435);transform-origin:0 50%;">[Root]</span>
<svg class="a" style="left:6px;top:400px" width="15" height="14" viewBox="0 0 15 14"><path d="M0.8 7.6L3.2 4.9L5.6 7.9L13.2 0.4L14.6 1.6L14.6 4.2L5.8 13.2L0.8 9.6Z" fill="#0a7a0a"/><path d="M1.2 7.4L3.2 5.2L5.6 8.2L13.2 0.8L14.2 1.8L5.7 10.6Z" fill="#12a812"/></svg>
<span class="t" style="left:26.12px;top:398px;font-size:11px;color:#111;letter-spacing:0.182px;">(5)</span>
<span class="t" style="left:43.22px;top:398px;font-size:11px;color:#111;letter-spacing:-0.096px;">[00,249]</span>
<span class="t" style="left:85.05px;top:398px;font-size:11px;color:#111;transform:scaleX(0.8860);transform-origin:0 50%;">DISC:</span>
<span class="t" style="left:114.05px;top:398px;font-size:11px;color:#111;transform:scaleX(0.8751);transform-origin:0 50%;">DISC</span>
<span class="t" style="left:140.1px;top:398px;font-size:11px;color:#111;transform:scaleX(0.8891);transform-origin:0 50%;">UN_MUTE,</span>
<span class="t" style="left:193.05px;top:398px;font-size:11px;color:#111;letter-spacing:0.032px;">Manufacturer</span>
<span class="t" style="left:261.25px;top:398px;font-size:11px;color:#111;letter-spacing:0.052px;">Broadcast</span>
<span class="t" style="left:314.36px;top:398px;font-size:11px;color:#111;transform:scaleX(0.9024);transform-origin:0 50%;">534C:FFFFFFFF</span>
<svg class="a" style="left:6px;top:416px" width="15" height="14" viewBox="0 0 15 14"><path d="M0.8 7.6L3.2 4.9L5.6 7.9L13.2 0.4L14.6 1.6L14.6 4.2L5.8 13.2L0.8 9.6Z" fill="#0a7a0a"/><path d="M1.2 7.4L3.2 5.2L5.6 8.2L13.2 0.8L14.2 1.8L5.7 10.6Z" fill="#12a812"/></svg>
<span class="t" style="left:26.12px;top:414px;font-size:11px;color:#111;letter-spacing:0.182px;">(6)</span>
<span class="t" style="left:43.22px;top:414px;font-size:11px;color:#111;letter-spacing:-0.096px;">[00,272]</span>
<span class="t" style="left:85.05px;top:414px;font-size:11px;color:#111;transform:scaleX(0.8860);transform-origin:0 50%;">DISC:</span>
<span class="t" style="left:114.05px;top:414px;font-size:11px;color:#111;transform:scaleX(0.8751);transform-origin:0 50%;">DISC</span>
<span class="t" style="left:140.1px;top:414px;font-size:11px;color:#111;transform:scaleX(0.8649);transform-origin:0 50%;">UNIQUE</span>
<span class="t" style="left:180.05px;top:414px;font-size:11px;color:#111;transform:scaleX(0.9214);transform-origin:0 50%;">BRANCH</span>
<span class="t" style="left:226.02px;top:414px;font-size:11px;color:#111;transform:scaleX(0.9435);transform-origin:0 50%;">[Root]</span>
<svg class="a" style="left:6px;top:432px" width="15" height="14" viewBox="0 0 15 14"><path d="M0.8 7.6L3.2 4.9L5.6 7.9L13.2 0.4L14.6 1.6L14.6 4.2L5.8 13.2L0.8 9.6Z" fill="#0a7a0a"/><path d="M1.2 7.4L3.2 5.2L5.6 8.2L13.2 0.8L14.2 1.8L5.7 10.6Z" fill="#12a812"/></svg>
<span class="t" style="left:26.12px;top:430px;font-size:11px;color:#111;letter-spacing:0.182px;">(7)</span>
<span class="t" style="left:43.22px;top:430px;font-size:11px;color:#111;letter-spacing:-0.096px;">[00,367]</span>
<span class="t" style="left:85.05px;top:430px;font-size:11px;color:#111;transform:scaleX(0.8860);transform-origin:0 50%;">DISC:</span>
<span class="t" style="left:114.05px;top:430px;font-size:11px;color:#111;transform:scaleX(0.8751);transform-origin:0 50%;">DISC</span>
<span class="t" style="left:140.05px;top:430px;font-size:11px;color:#111;transform:scaleX(0.8763);transform-origin:0 50%;">MUTE,</span>
<span class="t" style="left:173.05px;top:430px;font-size:11px;color:#111;letter-spacing:0.032px;">Manufacturer</span>
<span class="t" style="left:241.25px;top:430px;font-size:11px;color:#111;letter-spacing:0.052px;">Broadcast</span>
<span class="t" style="left:294.36px;top:430px;font-size:11px;color:#111;transform:scaleX(0.9024);transform-origin:0 50%;">534C:FFFFFFFF</span>
<svg class="a" style="left:6px;top:448px" width="15" height="14" viewBox="0 0 15 14"><path d="M0.8 7.6L3.2 4.9L5.6 7.9L13.2 0.4L14.6 1.6L14.6 4.2L5.8 13.2L0.8 9.6Z" fill="#0a7a0a"/><path d="M1.2 7.4L3.2 5.2L5.6 8.2L13.2 0.8L14.2 1.8L5.7 10.6Z" fill="#12a812"/></svg>
<span class="t" style="left:26.12px;top:446px;font-size:11px;color:#111;letter-spacing:0.182px;">(8)</span>
<span class="t" style="left:43.22px;top:446px;font-size:11px;color:#111;letter-spacing:-0.096px;">[00,401]</span>
<span class="t" style="left:85.05px;top:446px;font-size:11px;color:#111;transform:scaleX(0.8860);transform-origin:0 50%;">DISC:</span>
<span class="t" style="left:114.05px;top:446px;font-size:11px;color:#111;transform:scaleX(0.8751);transform-origin:0 50%;">DISC</span>
<span class="t" style="left:140.1px;top:446px;font-size:11px;color:#111;transform:scaleX(0.8649);transform-origin:0 50%;">UNIQUE</span>
<span class="t" style="left:180.05px;top:446px;font-size:11px;color:#111;transform:scaleX(0.9214);transform-origin:0 50%;">BRANCH</span>
<span class="t" style="left:226.02px;top:446px;font-size:11px;color:#111;transform:scaleX(0.9435);transform-origin:0 50%;">[Root]</span>
<svg class="a" style="left:6px;top:464px" width="15" height="14" viewBox="0 0 15 14"><path d="M0.8 7.6L3.2 4.9L5.6 7.9L13.2 0.4L14.6 1.6L14.6 4.2L5.8 13.2L0.8 9.6Z" fill="#0a7a0a"/><path d="M1.2 7.4L3.2 5.2L5.6 8.2L13.2 0.8L14.2 1.8L5.7 10.6Z" fill="#12a812"/></svg>
<span class="t" style="left:26.12px;top:462px;font-size:11px;color:#111;letter-spacing:0.182px;">(9)</span>
<span class="t" style="left:43.22px;top:462px;font-size:11px;color:#111;letter-spacing:-0.096px;">[00,585]</span>
<span class="t" style="left:85.05px;top:462px;font-size:11px;color:#111;transform:scaleX(0.8860);transform-origin:0 50%;">DISC:</span>
<span class="t" style="left:114.05px;top:462px;font-size:11px;color:#111;transform:scaleX(0.8751);transform-origin:0 50%;">DISC</span>
<span class="t" style="left:140.1px;top:462px;font-size:11px;color:#111;transform:scaleX(0.8891);transform-origin:0 50%;">UN_MUTE,</span>
<span class="t" style="left:193.16px;top:462px;font-size:11px;color:#111;transform:scaleX(0.9579);transform-origin:0 50%;">534C:36030000</span>
<svg class="a" style="left:6px;top:480px" width="15" height="14" viewBox="0 0 15 14"><path d="M0.8 7.6L3.2 4.9L5.6 7.9L13.2 0.4L14.6 1.6L14.6 4.2L5.8 13.2L0.8 9.6Z" fill="#0a7a0a"/><path d="M1.2 7.4L3.2 5.2L5.6 8.2L13.2 0.8L14.2 1.8L5.7 10.6Z" fill="#12a812"/></svg>
<span class="t" style="left:26.12px;top:478px;font-size:11px;color:#111;letter-spacing:0.109px;">(10)</span>
<span class="t" style="left:49.22px;top:478px;font-size:11px;color:#111;letter-spacing:-0.096px;">[00,613]</span>
<span class="t" style="left:91.05px;top:478px;font-size:11px;color:#111;transform:scaleX(0.8860);transform-origin:0 50%;">DISC:</span>
<span class="t" style="left:120.05px;top:478px;font-size:11px;color:#111;transform:scaleX(0.8751);transform-origin:0 50%;">DISC</span>
<span class="t" style="left:146.1px;top:478px;font-size:11px;color:#111;transform:scaleX(0.8649);transform-origin:0 50%;">UNIQUE</span>
<span class="t" style="left:186.05px;top:478px;font-size:11px;color:#111;transform:scaleX(0.9214);transform-origin:0 50%;">BRANCH</span>
<span class="t" style="left:232.02px;top:478px;font-size:11px;color:#111;transform:scaleX(0.9435);transform-origin:0 50%;">[Root]</span>
<svg class="a" style="left:6px;top:496px" width="15" height="14" viewBox="0 0 15 14"><path d="M0.8 7.6L3.2 4.9L5.6 7.9L13.2 0.4L14.6 1.6L14.6 4.2L5.8 13.2L0.8 9.6Z" fill="#0a7a0a"/><path d="M1.2 7.4L3.2 5.2L5.6 8.2L13.2 0.8L14.2 1.8L5.7 10.6Z" fill="#12a812"/></svg>
<span class="t" style="left:26.12px;top:494px;font-size:11px;color:#111;letter-spacing:0.312px;">(11)</span>
<span class="t" style="left:49.22px;top:494px;font-size:11px;color:#111;letter-spacing:-0.096px;">[00,699]</span>
<span class="t" style="left:91.05px;top:494px;font-size:11px;color:#111;transform:scaleX(0.8860);transform-origin:0 50%;">DISC:</span>
<span class="t" style="left:120.05px;top:494px;font-size:11px;color:#111;transform:scaleX(0.8751);transform-origin:0 50%;">DISC</span>
<span class="t" style="left:146.05px;top:494px;font-size:11px;color:#111;transform:scaleX(0.8763);transform-origin:0 50%;">MUTE,</span>
<span class="t" style="left:179.16px;top:494px;font-size:11px;color:#111;transform:scaleX(0.9579);transform-origin:0 50%;">534C:36030000</span>
<svg class="a" style="left:6px;top:512px" width="15" height="14" viewBox="0 0 15 14"><path d="M0.8 7.6L3.2 4.9L5.6 7.9L13.2 0.4L14.6 1.6L14.6 4.2L5.8 13.2L0.8 9.6Z" fill="#0a7a0a"/><path d="M1.2 7.4L3.2 5.2L5.6 8.2L13.2 0.8L14.2 1.8L5.7 10.6Z" fill="#12a812"/></svg>
<span class="t" style="left:26.12px;top:510px;font-size:11px;color:#111;letter-spacing:0.109px;">(12)</span>
<span class="t" style="left:49.22px;top:510px;font-size:11px;color:#111;letter-spacing:-0.096px;">[00,725]</span>
<span class="t" style="left:91.05px;top:510px;font-size:11px;color:#111;transform:scaleX(0.8860);transform-origin:0 50%;">DISC:</span>
<span class="t" style="left:120.05px;top:510px;font-size:11px;color:#111;transform:scaleX(0.8751);transform-origin:0 50%;">DISC</span>
<span class="t" style="left:146.1px;top:510px;font-size:11px;color:#111;transform:scaleX(0.8649);transform-origin:0 50%;">UNIQUE</span>
<span class="t" style="left:186.05px;top:510px;font-size:11px;color:#111;transform:scaleX(0.9214);transform-origin:0 50%;">BRANCH</span>
<span class="t" style="left:232.02px;top:510px;font-size:11px;color:#111;transform:scaleX(0.9435);transform-origin:0 50%;">[Root]</span>
<svg class="a" style="left:6px;top:528px" width="15" height="14" viewBox="0 0 15 14"><path d="M0.8 7.6L3.2 4.9L5.6 7.9L13.2 0.4L14.6 1.6L14.6 4.2L5.8 13.2L0.8 9.6Z" fill="#0a7a0a"/><path d="M1.2 7.4L3.2 5.2L5.6 8.2L13.2 0.8L14.2 1.8L5.7 10.6Z" fill="#12a812"/></svg>
<span class="t" style="left:26.12px;top:526px;font-size:11px;color:#111;letter-spacing:0.109px;">(13)</span>
<span class="t" style="left:49.22px;top:526px;font-size:11px;color:#111;letter-spacing:-0.096px;">[00,809]</span>
<span class="t" style="left:91.05px;top:526px;font-size:11px;color:#111;transform:scaleX(0.8860);transform-origin:0 50%;">DISC:</span>
<span class="t" style="left:120.05px;top:526px;font-size:11px;color:#111;transform:scaleX(0.8751);transform-origin:0 50%;">DISC</span>
<span class="t" style="left:146.1px;top:526px;font-size:11px;color:#111;transform:scaleX(0.8936);transform-origin:0 50%;">UN</span>
<span class="t" style="left:163.25px;top:526px;font-size:11px;color:#111;transform:scaleX(0.8763);transform-origin:0 50%;">MUTE,</span>
<span class="t" style="left:196.3px;top:526px;font-size:11px;color:#111;letter-spacing:-0.134px;">SubDevice</span>
<span class="t" style="left:251.42px;top:526px;font-size:11px;color:#111;letter-spacing:0.089px;">[1]</span>
<span class="t" style="left:266.75px;top:526px;font-size:11px;color:#111;letter-spacing:0.094px;">Network</span>
<span class="t" style="left:310.75px;top:526px;font-size:11px;color:#111;letter-spacing:0.052px;">Broadcast</span>
<span class="t" style="left:363.8px;top:526px;font-size:11px;color:#111;transform:scaleX(0.8842);transform-origin:0 50%;">FFFF:FFFFFFFF</span>
<svg class="a" style="left:6px;top:544px" width="15" height="14" viewBox="0 0 15 14"><path d="M0.8 7.6L3.2 4.9L5.6 7.9L13.2 0.4L14.6 1.6L14.6 4.2L5.8 13.2L0.8 9.6Z" fill="#0a7a0a"/><path d="M1.2 7.4L3.2 5.2L5.6 8.2L13.2 0.8L14.2 1.8L5.7 10.6Z" fill="#12a812"/></svg>
<span class="t" style="left:26.12px;top:542px;font-size:11px;color:#111;letter-spacing:0.109px;">(14)</span>
<span class="t" style="left:49.22px;top:542px;font-size:11px;color:#111;letter-spacing:-0.096px;">[00,838]</span>
<span class="t" style="left:91.05px;top:542px;font-size:11px;color:#111;transform:scaleX(0.8860);transform-origin:0 50%;">DISC:</span>
<span class="t" style="left:120.05px;top:542px;font-size:11px;color:#111;transform:scaleX(0.8751);transform-origin:0 50%;">DISC</span>
<span class="t" style="left:146.1px;top:542px;font-size:11px;color:#111;transform:scaleX(0.8649);transform-origin:0 50%;">UNIQUE</span>
<span class="t" style="left:186.05px;top:542px;font-size:11px;color:#111;transform:scaleX(0.9214);transform-origin:0 50%;">BRANCH</span>
<span class="t" style="left:231.9px;top:542px;font-size:11px;color:#111;letter-spacing:-0.134px;">SubDevice</span>
<span class="t" style="left:287.02px;top:542px;font-size:11px;color:#111;letter-spacing:0.089px;">[1]</span>
<svg class="a" style="left:6px;top:560px" width="15" height="14" viewBox="0 0 15 14"><path d="M0.8 7.6L3.2 4.9L5.6 7.9L13.2 0.4L14.6 1.6L14.6 4.2L5.8 13.2L0.8 9.6Z" fill="#0a7a0a"/><path d="M1.2 7.4L3.2 5.2L5.6 8.2L13.2 0.8L14.2 1.8L5.7 10.6Z" fill="#12a812"/></svg>
<span class="t" style="left:26.12px;top:558px;font-size:11px;color:#111;letter-spacing:0.109px;">(15)</span>
<span class="t" style="left:49.22px;top:558px;font-size:11px;color:#111;letter-spacing:-0.096px;">[00,919]</span>
<span class="t" style="left:91.05px;top:558px;font-size:11px;color:#111;transform:scaleX(0.8860);transform-origin:0 50%;">DISC:</span>
<span class="t" style="left:120.05px;top:558px;font-size:11px;color:#111;transform:scaleX(0.8751);transform-origin:0 50%;">DISC</span>
<span class="t" style="left:146.05px;top:558px;font-size:11px;color:#111;transform:scaleX(0.8763);transform-origin:0 50%;">MUTE,</span>
<span class="t" style="left:179.1px;top:558px;font-size:11px;color:#111;letter-spacing:-0.134px;">SubDevice</span>
<span class="t" style="left:234.22px;top:558px;font-size:11px;color:#111;letter-spacing:0.089px;">[1]</span>
<span class="t" style="left:249.55px;top:558px;font-size:11px;color:#111;letter-spacing:0.094px;">Network</span>
<span class="t" style="left:293.55px;top:558px;font-size:11px;color:#111;letter-spacing:0.052px;">Broadcast</span>
<span class="t" style="left:346.6px;top:558px;font-size:11px;color:#111;transform:scaleX(0.8842);transform-origin:0 50%;">FFFF:FFFFFFFF</span>
<svg class="a" style="left:6px;top:576px" width="15" height="14" viewBox="0 0 15 14"><path d="M0.8 7.6L3.2 4.9L5.6 7.9L13.2 0.4L14.6 1.6L14.6 4.2L5.8 13.2L0.8 9.6Z" fill="#0a7a0a"/><path d="M1.2 7.4L3.2 5.2L5.6 8.2L13.2 0.8L14.2 1.8L5.7 10.6Z" fill="#12a812"/></svg>
<span class="t" style="left:26.12px;top:574px;font-size:11px;color:#111;letter-spacing:0.109px;">(16)</span>
<span class="t" style="left:49.22px;top:574px;font-size:11px;color:#111;letter-spacing:-0.096px;">[00,953]</span>
<span class="t" style="left:91.05px;top:574px;font-size:11px;color:#111;transform:scaleX(0.8860);transform-origin:0 50%;">DISC:</span>
<span class="t" style="left:120.05px;top:574px;font-size:11px;color:#111;transform:scaleX(0.8751);transform-origin:0 50%;">DISC</span>
<span class="t" style="left:146.1px;top:574px;font-size:11px;color:#111;transform:scaleX(0.8649);transform-origin:0 50%;">UNIQUE</span>
<span class="t" style="left:186.05px;top:574px;font-size:11px;color:#111;transform:scaleX(0.9214);transform-origin:0 50%;">BRANCH</span>
<span class="t" style="left:231.9px;top:574px;font-size:11px;color:#111;letter-spacing:-0.134px;">SubDevice</span>
<span class="t" style="left:287.02px;top:574px;font-size:11px;color:#111;letter-spacing:0.089px;">[1]</span>
<svg class="a" style="left:6px;top:592px" width="15" height="14" viewBox="0 0 15 14"><path d="M0.8 7.6L3.2 4.9L5.6 7.9L13.2 0.4L14.6 1.6L14.6 4.2L5.8 13.2L0.8 9.6Z" fill="#0a7a0a"/><path d="M1.2 7.4L3.2 5.2L5.6 8.2L13.2 0.8L14.2 1.8L5.7 10.6Z" fill="#12a812"/></svg>
<span class="t" style="left:26.12px;top:590px;font-size:11px;color:#111;letter-spacing:0.109px;">(17)</span>
<span class="t" style="left:49.22px;top:590px;font-size:11px;color:#111;letter-spacing:-0.096px;">[01,030]</span>
<span class="t" style="left:91.05px;top:590px;font-size:11px;color:#111;transform:scaleX(0.8860);transform-origin:0 50%;">DISC:</span>
<span class="t" style="left:120.05px;top:590px;font-size:11px;color:#111;transform:scaleX(0.8751);transform-origin:0 50%;">DISC</span>
<span class="t" style="left:146.1px;top:590px;font-size:11px;color:#111;transform:scaleX(0.8891);transform-origin:0 50%;">UN_MUTE,</span>
<span class="t" style="left:199.1px;top:590px;font-size:11px;color:#111;letter-spacing:-0.134px;">SubDevice</span>
<span class="t" style="left:254.22px;top:590px;font-size:11px;color:#111;letter-spacing:0.089px;">[1]</span>
<span class="t" style="left:269.66px;top:590px;font-size:11px;color:#111;transform:scaleX(0.9579);transform-origin:0 50%;">534C:36030000</span>
<svg class="a" style="left:6px;top:608px" width="15" height="14" viewBox="0 0 15 14"><path d="M0.8 7.6L3.2 4.9L5.6 7.9L13.2 0.4L14.6 1.6L14.6 4.2L5.8 13.2L0.8 9.6Z" fill="#0a7a0a"/><path d="M1.2 7.4L3.2 5.2L5.6 8.2L13.2 0.8L14.2 1.8L5.7 10.6Z" fill="#12a812"/></svg>
<span class="t" style="left:26.12px;top:606px;font-size:11px;color:#111;letter-spacing:0.109px;">(18)</span>
<span class="t" style="left:49.22px;top:606px;font-size:11px;color:#111;letter-spacing:-0.096px;">[01,067]</span>
<span class="t" style="left:91.05px;top:606px;font-size:11px;color:#111;transform:scaleX(0.8860);transform-origin:0 50%;">DISC:</span>
<span class="t" style="left:120.05px;top:606px;font-size:11px;color:#111;transform:scaleX(0.8751);transform-origin:0 50%;">DISC</span>
<span class="t" style="left:146.1px;top:606px;font-size:11px;color:#111;transform:scaleX(0.8649);transform-origin:0 50%;">UNIQUE</span>
<span class="t" style="left:186.05px;top:606px;font-size:11px;color:#111;transform:scaleX(0.9214);transform-origin:0 50%;">BRANCH</span>
<span class="t" style="left:231.9px;top:606px;font-size:11px;color:#111;letter-spacing:-0.134px;">SubDevice</span>
<span class="t" style="left:287.02px;top:606px;font-size:11px;color:#111;letter-spacing:0.089px;">[1]</span>
<svg class="a" style="left:6px;top:624px" width="15" height="14" viewBox="0 0 15 14"><path d="M0.8 7.6L3.2 4.9L5.6 7.9L13.2 0.4L14.6 1.6L14.6 4.2L5.8 13.2L0.8 9.6Z" fill="#0a7a0a"/><path d="M1.2 7.4L3.2 5.2L5.6 8.2L13.2 0.8L14.2 1.8L5.7 10.6Z" fill="#12a812"/></svg>
<span class="t" style="left:26.12px;top:622px;font-size:11px;color:#111;letter-spacing:0.109px;">(19)</span>
<span class="t" style="left:49.22px;top:622px;font-size:11px;color:#111;letter-spacing:-0.096px;">[01,142]</span>
<span class="t" style="left:91.05px;top:622px;font-size:11px;color:#111;transform:scaleX(0.8860);transform-origin:0 50%;">DISC:</span>
<span class="t" style="left:120.05px;top:622px;font-size:11px;color:#111;transform:scaleX(0.8751);transform-origin:0 50%;">DISC</span>
<span class="t" style="left:146.05px;top:622px;font-size:11px;color:#111;transform:scaleX(0.8763);transform-origin:0 50%;">MUTE,</span>
<span class="t" style="left:179.1px;top:622px;font-size:11px;color:#111;letter-spacing:-0.134px;">SubDevice</span>
<span class="t" style="left:234.22px;top:622px;font-size:11px;color:#111;letter-spacing:0.089px;">[1]</span>
<span class="t" style="left:249.66px;top:622px;font-size:11px;color:#111;transform:scaleX(0.9579);transform-origin:0 50%;">534C:36030000</span>
<svg class="a" style="left:6px;top:640px" width="15" height="14" viewBox="0 0 15 14"><path d="M0.8 7.6L3.2 4.9L5.6 7.9L13.2 0.4L14.6 1.6L14.6 4.2L5.8 13.2L0.8 9.6Z" fill="#0a7a0a"/><path d="M1.2 7.4L3.2 5.2L5.6 8.2L13.2 0.8L14.2 1.8L5.7 10.6Z" fill="#12a812"/></svg>
<span class="t" style="left:26.12px;top:638px;font-size:11px;color:#111;letter-spacing:0.109px;">(20)</span>
<span class="t" style="left:49.22px;top:638px;font-size:11px;color:#111;letter-spacing:-0.096px;">[01,180]</span>
<span class="t" style="left:91.05px;top:638px;font-size:11px;color:#111;transform:scaleX(0.8860);transform-origin:0 50%;">DISC:</span>
<span class="t" style="left:120.05px;top:638px;font-size:11px;color:#111;transform:scaleX(0.8751);transform-origin:0 50%;">DISC</span>
<span class="t" style="left:146.1px;top:638px;font-size:11px;color:#111;transform:scaleX(0.8649);transform-origin:0 50%;">UNIQUE</span>
<span class="t" style="left:186.05px;top:638px;font-size:11px;color:#111;transform:scaleX(0.9214);transform-origin:0 50%;">BRANCH</span>
<span class="t" style="left:231.9px;top:638px;font-size:11px;color:#111;letter-spacing:-0.134px;">SubDevice</span>
<span class="t" style="left:287.02px;top:638px;font-size:11px;color:#111;letter-spacing:0.089px;">[1]</span>
<svg class="a" style="left:6px;top:656px" width="15" height="14" viewBox="0 0 15 14"><path d="M0.8 7.6L3.2 4.9L5.6 7.9L13.2 0.4L14.6 1.6L14.6 4.2L5.8 13.2L0.8 9.6Z" fill="#0a7a0a"/><path d="M1.2 7.4L3.2 5.2L5.6 8.2L13.2 0.8L14.2 1.8L5.7 10.6Z" fill="#12a812"/></svg>
<span class="t" style="left:26.12px;top:654px;font-size:11px;color:#111;letter-spacing:0.109px;">(21)</span>
<span class="t" style="left:49.22px;top:654px;font-size:11px;color:#111;letter-spacing:-0.096px;">[01,254]</span>
<span class="t" style="left:91.05px;top:654px;font-size:11px;color:#111;transform:scaleX(0.8860);transform-origin:0 50%;">DISC:</span>
<span class="t" style="left:120.05px;top:654px;font-size:11px;color:#111;transform:scaleX(0.8751);transform-origin:0 50%;">DISC</span>
<span class="t" style="left:146.1px;top:654px;font-size:11px;color:#111;transform:scaleX(0.8936);transform-origin:0 50%;">UN</span>
<span class="t" style="left:163.25px;top:654px;font-size:11px;color:#111;transform:scaleX(0.8763);transform-origin:0 50%;">MUTE,</span>
<span class="t" style="left:196.25px;top:654px;font-size:11px;color:#111;letter-spacing:0.094px;">Network</span>
<span class="t" style="left:240.25px;top:654px;font-size:11px;color:#111;letter-spacing:0.052px;">Broadcast</span>
<span class="t" style="left:293.3px;top:654px;font-size:11px;color:#111;transform:scaleX(0.8842);transform-origin:0 50%;">FFFF:FFFFFFFF</span>
<svg class="a" style="left:6px;top:672px" width="15" height="14" viewBox="0 0 15 14"><path d="M0.8 7.6L3.2 4.9L5.6 7.9L13.2 0.4L14.6 1.6L14.6 4.2L5.8 13.2L0.8 9.6Z" fill="#0a7a0a"/><path d="M1.2 7.4L3.2 5.2L5.6 8.2L13.2 0.8L14.2 1.8L5.7 10.6Z" fill="#12a812"/></svg>
<span class="t" style="left:26.12px;top:670px;font-size:11px;color:#111;letter-spacing:0.109px;">(22)</span>
<span class="t" style="left:49.22px;top:670px;font-size:11px;color:#111;letter-spacing:-0.096px;">[01,294]</span>
<span class="t" style="left:91.05px;top:670px;font-size:11px;color:#111;transform:scaleX(0.8860);transform-origin:0 50%;">DISC:</span>
<span class="t" style="left:120.05px;top:670px;font-size:11px;color:#111;transform:scaleX(0.8751);transform-origin:0 50%;">DISC</span>
<span class="t" style="left:146.1px;top:670px;font-size:11px;color:#111;transform:scaleX(0.8925);transform-origin:0 50%;">UN-MUTE,</span>
<span class="t" style="left:197.16px;top:670px;font-size:11px;color:#111;transform:scaleX(0.9579);transform-origin:0 50%;">534C:36030000</span>
<svg class="a" style="left:6px;top:688px" width="15" height="14" viewBox="0 0 15 14"><path d="M0.8 7.6L3.2 4.9L5.6 7.9L13.2 0.4L14.6 1.6L14.6 4.2L5.8 13.2L0.8 9.6Z" fill="#0a7a0a"/><path d="M1.2 7.4L3.2 5.2L5.6 8.2L13.2 0.8L14.2 1.8L5.7 10.6Z" fill="#12a812"/></svg>
<span class="t" style="left:26.12px;top:686px;font-size:11px;color:#111;letter-spacing:0.109px;">(23)</span>
<span class="t" style="left:49.22px;top:686px;font-size:11px;color:#111;letter-spacing:-0.096px;">[01,328]</span>
<span class="t" style="left:91.05px;top:686px;font-size:11px;color:#111;transform:scaleX(0.8860);transform-origin:0 50%;">DISC:</span>
<span class="t" style="left:120.05px;top:686px;font-size:11px;color:#111;transform:scaleX(0.8751);transform-origin:0 50%;">DISC</span>
<span class="t" style="left:146.1px;top:686px;font-size:11px;color:#111;transform:scaleX(0.8649);transform-origin:0 50%;">UNIQUE</span>
<span class="t" style="left:186.05px;top:686px;font-size:11px;color:#111;transform:scaleX(0.9214);transform-origin:0 50%;">BRANCH</span>
<span class="t" style="left:232.02px;top:686px;font-size:11px;color:#111;transform:scaleX(0.9435);transform-origin:0 50%;">[Root]</span>
<svg class="a" style="left:6px;top:704px" width="15" height="14" viewBox="0 0 15 14"><path d="M0.8 7.6L3.2 4.9L5.6 7.9L13.2 0.4L14.6 1.6L14.6 4.2L5.8 13.2L0.8 9.6Z" fill="#0a7a0a"/><path d="M1.2 7.4L3.2 5.2L5.6 8.2L13.2 0.8L14.2 1.8L5.7 10.6Z" fill="#12a812"/></svg>
<span class="t" style="left:26.12px;top:702px;font-size:11px;color:#111;letter-spacing:0.109px;">(24)</span>
<span class="t" style="left:49.22px;top:702px;font-size:11px;color:#111;letter-spacing:-0.096px;">[01,427]</span>
<span class="t" style="left:91.15px;top:702px;font-size:11px;color:#111;transform:scaleX(0.9610);transform-origin:0 50%;">GET:</span>
<span class="t" style="left:117.55px;top:702px;font-size:11px;color:#111;transform:scaleX(0.8751);transform-origin:0 50%;">DISC</span>
<span class="t" style="left:143.55px;top:702px;font-size:11px;color:#111;transform:scaleX(0.8662);transform-origin:0 50%;">MUTE</span>
<span class="t" style="left:173.72px;top:702px;font-size:11px;color:#111;transform:scaleX(0.9517);transform-origin:0 50%;">[GET:Root]</span>
<span class="t" style="left:227.86px;top:702px;font-size:11px;color:#111;transform:scaleX(0.9579);transform-origin:0 50%;">534C:36030000</span>
<svg class="a" style="left:6px;top:720px" width="15" height="14" viewBox="0 0 15 14"><path d="M0.8 7.6L3.2 4.9L5.6 7.9L13.2 0.4L14.6 1.6L14.6 4.2L5.8 13.2L0.8 9.6Z" fill="#0a7a0a"/><path d="M1.2 7.4L3.2 5.2L5.6 8.2L13.2 0.8L14.2 1.8L5.7 10.6Z" fill="#12a812"/></svg>
<span class="t" style="left:26.12px;top:718px;font-size:11px;color:#111;letter-spacing:0.109px;">(25)</span>
<span class="t" style="left:49.22px;top:718px;font-size:11px;color:#111;letter-spacing:-0.096px;">[01,471]</span>
<span class="t" style="left:91.05px;top:718px;font-size:11px;color:#111;transform:scaleX(0.8860);transform-origin:0 50%;">DISC:</span>
<span class="t" style="left:120.05px;top:718px;font-size:11px;color:#111;transform:scaleX(0.8751);transform-origin:0 50%;">DISC</span>
<span class="t" style="left:146.1px;top:718px;font-size:11px;color:#111;transform:scaleX(0.8649);transform-origin:0 50%;">UNIQUE</span>
<span class="t" style="left:186.05px;top:718px;font-size:11px;color:#111;transform:scaleX(0.9214);transform-origin:0 50%;">BRANCH</span>
<span class="t" style="left:232.02px;top:718px;font-size:11px;color:#111;transform:scaleX(0.9435);transform-origin:0 50%;">[Root]</span>
<svg class="a" style="left:6px;top:736px" width="15" height="14" viewBox="0 0 15 14"><path d="M0.8 7.6L3.2 4.9L5.6 7.9L13.2 0.4L14.6 1.6L14.6 4.2L5.8 13.2L0.8 9.6Z" fill="#0a7a0a"/><path d="M1.2 7.4L3.2 5.2L5.6 8.2L13.2 0.8L14.2 1.8L5.7 10.6Z" fill="#12a812"/></svg>
<span class="t" style="left:26.12px;top:734px;font-size:11px;color:#111;letter-spacing:0.109px;">(26)</span>
<span class="t" style="left:49.22px;top:734px;font-size:11px;color:#111;letter-spacing:-0.096px;">[01,584]</span>
<span class="t" style="left:91.05px;top:734px;font-size:11px;color:#111;transform:scaleX(0.8860);transform-origin:0 50%;">DISC:</span>
<span class="t" style="left:120.05px;top:734px;font-size:11px;color:#111;transform:scaleX(0.8751);transform-origin:0 50%;">DISC</span>
<span class="t" style="left:146.05px;top:734px;font-size:11px;color:#111;transform:scaleX(0.8662);transform-origin:0 50%;">MUTE</span>
<span class="t" style="left:176.05px;top:734px;font-size:11px;color:#111;transform:scaleX(0.9583);transform-origin:0 50%;">Malformed</span>
<span class="t" style="left:228.85px;top:734px;font-size:11px;color:#111;transform:scaleX(0.8730);transform-origin:0 50%;">PD/PDL</span>
<span class="t" style="left:266.66px;top:734px;font-size:11px;color:#111;transform:scaleX(0.9579);transform-origin:0 50%;">534C:36030000</span>
<svg class="a" style="left:6px;top:752px" width="15" height="14" viewBox="0 0 15 14"><path d="M0.8 7.6L3.2 4.9L5.6 7.9L13.2 0.4L14.6 1.6L14.6 4.2L5.8 13.2L0.8 9.6Z" fill="#0a7a0a"/><path d="M1.2 7.4L3.2 5.2L5.6 8.2L13.2 0.8L14.2 1.8L5.7 10.6Z" fill="#12a812"/></svg>
<span class="t" style="left:26.12px;top:750px;font-size:11px;color:#111;letter-spacing:0.109px;">(27)</span>
<span class="t" style="left:49.22px;top:750px;font-size:11px;color:#111;letter-spacing:-0.096px;">[01,634]</span>
<span class="t" style="left:91.05px;top:750px;font-size:11px;color:#111;transform:scaleX(0.8860);transform-origin:0 50%;">DISC:</span>
<span class="t" style="left:120.05px;top:750px;font-size:11px;color:#111;transform:scaleX(0.8751);transform-origin:0 50%;">DISC</span>
<span class="t" style="left:146.1px;top:750px;font-size:11px;color:#111;transform:scaleX(0.8649);transform-origin:0 50%;">UNIQUE</span>
<span class="t" style="left:186.05px;top:750px;font-size:11px;color:#111;transform:scaleX(0.9214);transform-origin:0 50%;">BRANCH</span>
<span class="t" style="left:232.02px;top:750px;font-size:11px;color:#111;transform:scaleX(0.9435);transform-origin:0 50%;">[Root]</span>
<svg class="a" style="left:6px;top:768px" width="15" height="14" viewBox="0 0 15 14"><path d="M0.8 7.6L3.2 4.9L5.6 7.9L13.2 0.4L14.6 1.6L14.6 4.2L5.8 13.2L0.8 9.6Z" fill="#0a7a0a"/><path d="M1.2 7.4L3.2 5.2L5.6 8.2L13.2 0.8L14.2 1.8L5.7 10.6Z" fill="#12a812"/></svg>
<span class="t" style="left:26.12px;top:766px;font-size:11px;color:#111;letter-spacing:0.109px;">(28)</span>
<span class="t" style="left:49.22px;top:766px;font-size:11px;color:#111;letter-spacing:-0.096px;">[01,756]</span>
<span class="t" style="left:91.05px;top:766px;font-size:11px;color:#111;transform:scaleX(0.8860);transform-origin:0 50%;">DISC:</span>
<span class="t" style="left:120.05px;top:766px;font-size:11px;color:#111;transform:scaleX(0.8751);transform-origin:0 50%;">DISC</span>
<span class="t" style="left:146.05px;top:766px;font-size:11px;color:#111;transform:scaleX(0.8662);transform-origin:0 50%;">MUTE</span>
<span class="t" style="left:176.22px;top:766px;font-size:11px;color:#111;transform:scaleX(0.9435);transform-origin:0 50%;">[Root]</span>
<span class="t" style="left:206.86px;top:766px;font-size:11px;color:#111;transform:scaleX(0.9579);transform-origin:0 50%;">534C:36030000</span>
<svg class="a" style="left:6px;top:784px" width="15" height="14" viewBox="0 0 15 14"><path d="M0.8 7.6L3.2 4.9L5.6 7.9L13.2 0.4L14.6 1.6L14.6 4.2L5.8 13.2L0.8 9.6Z" fill="#0a7a0a"/><path d="M1.2 7.4L3.2 5.2L5.6 8.2L13.2 0.8L14.2 1.8L5.7 10.6Z" fill="#12a812"/></svg>
<span class="t" style="left:26.12px;top:782px;font-size:11px;color:#111;letter-spacing:0.109px;">(29)</span>
<span class="t" style="left:49.22px;top:782px;font-size:11px;color:#111;letter-spacing:-0.096px;">[01,795]</span>
<span class="t" style="left:91.05px;top:782px;font-size:11px;color:#111;transform:scaleX(0.8860);transform-origin:0 50%;">DISC:</span>
<span class="t" style="left:120.05px;top:782px;font-size:11px;color:#111;transform:scaleX(0.8751);transform-origin:0 50%;">DISC</span>
<span class="t" style="left:146.1px;top:782px;font-size:11px;color:#111;transform:scaleX(0.8649);transform-origin:0 50%;">UNIQUE</span>
<span class="t" style="left:186.05px;top:782px;font-size:11px;color:#111;transform:scaleX(0.9214);transform-origin:0 50%;">BRANCH</span>
<span class="t" style="left:232.02px;top:782px;font-size:11px;color:#111;transform:scaleX(0.9435);transform-origin:0 50%;">[Root]</span>
<svg class="a" style="left:6px;top:800px" width="15" height="14" viewBox="0 0 15 14"><path d="M0.8 7.6L3.2 4.9L5.6 7.9L13.2 0.4L14.6 1.6L14.6 4.2L5.8 13.2L0.8 9.6Z" fill="#0a7a0a"/><path d="M1.2 7.4L3.2 5.2L5.6 8.2L13.2 0.8L14.2 1.8L5.7 10.6Z" fill="#12a812"/></svg>
<span class="t" style="left:26.12px;top:798px;font-size:11px;color:#111;letter-spacing:0.109px;">(30)</span>
<span class="t" style="left:49.22px;top:798px;font-size:11px;color:#111;letter-spacing:-0.096px;">[01,869]</span>
<span class="t" style="left:91.15px;top:798px;font-size:11px;color:#111;transform:scaleX(0.9610);transform-origin:0 50%;">GET:</span>
<span class="t" style="left:117.55px;top:798px;font-size:11px;color:#111;transform:scaleX(0.8751);transform-origin:0 50%;">DISC</span>
<span class="t" style="left:143.6px;top:798px;font-size:11px;color:#111;transform:scaleX(0.8774);transform-origin:0 50%;">UN-MUTE</span>
<span class="t" style="left:191.22px;top:798px;font-size:11px;color:#111;transform:scaleX(0.9517);transform-origin:0 50%;">[GET:Root]</span>
<span class="t" style="left:245.36px;top:798px;font-size:11px;color:#111;transform:scaleX(0.9579);transform-origin:0 50%;">534C:36030000</span>
<svg class="a" style="left:6px;top:816px" width="15" height="14" viewBox="0 0 15 14"><path d="M0.8 7.6L3.2 4.9L5.6 7.9L13.2 0.4L14.6 1.6L14.6 4.2L5.8 13.2L0.8 9.6Z" fill="#0a7a0a"/><path d="M1.2 7.4L3.2 5.2L5.6 8.2L13.2 0.8L14.2 1.8L5.7 10.6Z" fill="#12a812"/></svg>
<span class="t" style="left:26.12px;top:814px;font-size:11px;color:#111;letter-spacing:0.109px;">(31)</span>
<span class="t" style="left:49.22px;top:814px;font-size:11px;color:#111;letter-spacing:-0.096px;">[01,924]</span>
<span class="t" style="left:91.05px;top:814px;font-size:11px;color:#111;transform:scaleX(0.8860);transform-origin:0 50%;">DISC:</span>
<span class="t" style="left:120.05px;top:814px;font-size:11px;color:#111;transform:scaleX(0.8751);transform-origin:0 50%;">DISC</span>
<span class="t" style="left:146.1px;top:814px;font-size:11px;color:#111;transform:scaleX(0.8649);transform-origin:0 50%;">UNIQUE</span>
<span class="t" style="left:186.05px;top:814px;font-size:11px;color:#111;transform:scaleX(0.9214);transform-origin:0 50%;">BRANCH</span>
<span class="t" style="left:232.02px;top:814px;font-size:11px;color:#111;transform:scaleX(0.9435);transform-origin:0 50%;">[Root]</span>
<svg class="a" style="left:6px;top:832px" width="15" height="14" viewBox="0 0 15 14"><path d="M0.8 7.6L3.2 4.9L5.6 7.9L13.2 0.4L14.6 1.6L14.6 4.2L5.8 13.2L0.8 9.6Z" fill="#0a7a0a"/><path d="M1.2 7.4L3.2 5.2L5.6 8.2L13.2 0.8L14.2 1.8L5.7 10.6Z" fill="#12a812"/></svg>
<span class="t" style="left:26.12px;top:830px;font-size:11px;color:#111;letter-spacing:0.109px;">(32)</span>
<span class="t" style="left:49.22px;top:830px;font-size:11px;color:#111;letter-spacing:-0.096px;">[02,042]</span>
<span class="t" style="left:91.05px;top:830px;font-size:11px;color:#111;transform:scaleX(0.8860);transform-origin:0 50%;">DISC:</span>
<span class="t" style="left:120.05px;top:830px;font-size:11px;color:#111;transform:scaleX(0.8751);transform-origin:0 50%;">DISC</span>
<span class="t" style="left:146.1px;top:830px;font-size:11px;color:#111;transform:scaleX(0.8774);transform-origin:0 50%;">UN-MUTE</span>
<span class="t" style="left:193.55px;top:830px;font-size:11px;color:#111;transform:scaleX(0.9583);transform-origin:0 50%;">Malformed</span>
<span class="t" style="left:246.35px;top:830px;font-size:11px;color:#111;transform:scaleX(0.8730);transform-origin:0 50%;">PD/PDL</span>
<span class="t" style="left:284.16px;top:830px;font-size:11px;color:#111;transform:scaleX(0.9579);transform-origin:0 50%;">534C:36030000</span>
<svg class="a" style="left:6px;top:848px" width="15" height="14" viewBox="0 0 15 14"><path d="M0.8 7.6L3.2 4.9L5.6 7.9L13.2 0.4L14.6 1.6L14.6 4.2L5.8 13.2L0.8 9.6Z" fill="#0a7a0a"/><path d="M1.2 7.4L3.2 5.2L5.6 8.2L13.2 0.8L14.2 1.8L5.7 10.6Z" fill="#12a812"/></svg>
<span class="t" style="left:26.12px;top:846px;font-size:11px;color:#111;letter-spacing:0.109px;">(33)</span>
<span class="t" style="left:49.22px;top:846px;font-size:11px;color:#111;letter-spacing:-0.096px;">[02,087]</span>
<span class="t" style="left:91.05px;top:846px;font-size:11px;color:#111;transform:scaleX(0.8860);transform-origin:0 50%;">DISC:</span>
<span class="t" style="left:120.05px;top:846px;font-size:11px;color:#111;transform:scaleX(0.8751);transform-origin:0 50%;">DISC</span>
<span class="t" style="left:146.1px;top:846px;font-size:11px;color:#111;transform:scaleX(0.8649);transform-origin:0 50%;">UNIQUE</span>
<span class="t" style="left:186.05px;top:846px;font-size:11px;color:#111;transform:scaleX(0.9214);transform-origin:0 50%;">BRANCH</span>
<span class="t" style="left:232.02px;top:846px;font-size:11px;color:#111;transform:scaleX(0.9435);transform-origin:0 50%;">[Root]</span>
<svg class="a" style="left:6px;top:864px" width="15" height="14" viewBox="0 0 15 14"><path d="M0.8 7.6L3.2 4.9L5.6 7.9L13.2 0.4L14.6 1.6L14.6 4.2L5.8 13.2L0.8 9.6Z" fill="#0a7a0a"/><path d="M1.2 7.4L3.2 5.2L5.6 8.2L13.2 0.8L14.2 1.8L5.7 10.6Z" fill="#12a812"/></svg>
<span class="t" style="left:26.12px;top:862px;font-size:11px;color:#111;letter-spacing:0.109px;">(34)</span>
<span class="t" style="left:49.22px;top:862px;font-size:11px;color:#111;letter-spacing:-0.096px;">[02,200]</span>
<span class="t" style="left:91.05px;top:862px;font-size:11px;color:#111;transform:scaleX(0.8860);transform-origin:0 50%;">DISC:</span>
<span class="t" style="left:120.05px;top:862px;font-size:11px;color:#111;transform:scaleX(0.8751);transform-origin:0 50%;">DISC</span>
<span class="t" style="left:146.1px;top:862px;font-size:11px;color:#111;transform:scaleX(0.8774);transform-origin:0 50%;">UN-MUTE</span>
<span class="t" style="left:193.72px;top:862px;font-size:11px;color:#111;transform:scaleX(0.9435);transform-origin:0 50%;">[Root]</span>
<span class="t" style="left:224.36px;top:862px;font-size:11px;color:#111;transform:scaleX(0.9579);transform-origin:0 50%;">534C:36030000</span>
<svg class="a" style="left:6px;top:880px" width="15" height="14" viewBox="0 0 15 14"><path d="M0.8 7.6L3.2 4.9L5.6 7.9L13.2 0.4L14.6 1.6L14.6 4.2L5.8 13.2L0.8 9.6Z" fill="#0a7a0a"/><path d="M1.2 7.4L3.2 5.2L5.6 8.2L13.2 0.8L14.2 1.8L5.7 10.6Z" fill="#12a812"/></svg>
<span class="t" style="left:26.12px;top:878px;font-size:11px;color:#111;letter-spacing:0.109px;">(35)</span>
<span class="t" style="left:49.22px;top:878px;font-size:11px;color:#111;letter-spacing:-0.096px;">[02,234]</span>
<span class="t" style="left:91.05px;top:878px;font-size:11px;color:#111;transform:scaleX(0.8860);transform-origin:0 50%;">DISC:</span>
<span class="t" style="left:120.05px;top:878px;font-size:11px;color:#111;transform:scaleX(0.8751);transform-origin:0 50%;">DISC</span>
<span class="t" style="left:146.1px;top:878px;font-size:11px;color:#111;transform:scaleX(0.8649);transform-origin:0 50%;">UNIQUE</span>
<span class="t" style="left:186.05px;top:878px;font-size:11px;color:#111;transform:scaleX(0.9214);transform-origin:0 50%;">BRANCH</span>
<span class="t" style="left:232.02px;top:878px;font-size:11px;color:#111;transform:scaleX(0.9435);transform-origin:0 50%;">[Root]</span>
<svg class="a" style="left:6px;top:896px" width="15" height="14" viewBox="0 0 15 14"><path d="M0.8 7.6L3.2 4.9L5.6 7.9L13.2 0.4L14.6 1.6L14.6 4.2L5.8 13.2L0.8 9.6Z" fill="#0a7a0a"/><path d="M1.2 7.4L3.2 5.2L5.6 8.2L13.2 0.8L14.2 1.8L5.7 10.6Z" fill="#12a812"/></svg>
<span class="t" style="left:26.12px;top:894px;font-size:11px;color:#111;letter-spacing:0.109px;">(36)</span>
<span class="t" style="left:49.22px;top:894px;font-size:11px;color:#111;letter-spacing:-0.096px;">[02,313]</span>
<span class="t" style="left:91.05px;top:894px;font-size:11px;color:#111;transform:scaleX(0.8860);transform-origin:0 50%;">DISC:</span>
<span class="t" style="left:120.05px;top:894px;font-size:11px;color:#111;transform:scaleX(0.8751);transform-origin:0 50%;">DISC</span>
<span class="t" style="left:146.05px;top:894px;font-size:11px;color:#111;transform:scaleX(0.8662);transform-origin:0 50%;">MUTE</span>
<span class="t" style="left:176.22px;top:894px;font-size:11px;color:#111;transform:scaleX(0.9435);transform-origin:0 50%;">[Root]</span>
<span class="t" style="left:206.86px;top:894px;font-size:11px;color:#111;transform:scaleX(0.9579);transform-origin:0 50%;">534C:36030000</span>
<svg class="a" style="left:6px;top:912px" width="15" height="14" viewBox="0 0 15 14"><path d="M0.8 7.6L3.2 4.9L5.6 7.9L13.2 0.4L14.6 1.6L14.6 4.2L5.8 13.2L0.8 9.6Z" fill="#0a7a0a"/><path d="M1.2 7.4L3.2 5.2L5.6 8.2L13.2 0.8L14.2 1.8L5.7 10.6Z" fill="#12a812"/></svg>
<span class="t" style="left:26.12px;top:910px;font-size:11px;color:#111;letter-spacing:0.109px;">(37)</span>
<span class="t" style="left:49.22px;top:910px;font-size:11px;color:#111;letter-spacing:-0.096px;">[02,348]</span>
<span class="t" style="left:91.05px;top:910px;font-size:11px;color:#111;transform:scaleX(0.8860);transform-origin:0 50%;">DISC:</span>
<span class="t" style="left:120.05px;top:910px;font-size:11px;color:#111;transform:scaleX(0.8751);transform-origin:0 50%;">DISC</span>
<span class="t" style="left:146.1px;top:910px;font-size:11px;color:#111;transform:scaleX(0.8649);transform-origin:0 50%;">UNIQUE</span>
<span class="t" style="left:186.05px;top:910px;font-size:11px;color:#111;transform:scaleX(0.9214);transform-origin:0 50%;">BRANCH</span>
<span class="t" style="left:232.02px;top:910px;font-size:11px;color:#111;transform:scaleX(0.9435);transform-origin:0 50%;">[Root]</span>
<div style="left:3px;top:926px;width:899px;height:5px;overflow:hidden"><svg class="a" style="left:3px;top:2px" width="15" height="14" viewBox="0 0 15 14"><path d="M0.8 7.6L3.2 4.9L5.6 7.9L13.2 0.4L14.6 1.6L14.6 4.2L5.8 13.2L0.8 9.6Z" fill="#0a7a0a"/><path d="M1.2 7.4L3.2 5.2L5.6 8.2L13.2 0.8L14.2 1.8L5.7 10.6Z" fill="#12a812"/></svg></div>
<div style="left:902px;top:335px;width:16px;height:595px;background:#f0f0f0"></div>
<div style="left:902px;top:352px;width:15px;height:17px;background:#cdcdcd"></div>
<svg class="a" style="left:905px;top:340px" width="9" height="8" viewBox="0 0 9 8"><path d="M1 6L4.5 2.5L8 6" fill="none" stroke="#555" stroke-width="1.8"/></svg>
<svg class="a" style="left:905px;top:918px" width="9" height="8" viewBox="0 0 9 8"><path d="M1 2L4.5 5.5L8 2" fill="none" stroke="#555" stroke-width="1.8"/></svg>
<div style="left:920px;top:333px;width:5px;height:599px;background:#fff"></div>
<div style="left:922px;top:333px;width:1px;height:599px;background:#a0a0a0"></div>
<div style="left:925px;top:333px;width:993px;height:599px;background:#fff"></div>
<div style="left:925px;top:333px;width:1px;height:599px;background:#a0a0a0"></div>
<div style="left:926px;top:333px;width:992px;height:575px;background:#fff;border:1px solid #828790;box-sizing:border-box"></div>
<div style="left:926px;top:910px;width:992px;height:1px;background:#a0a0a0"></div>
<div style="left:926px;top:913px;width:992px;height:1px;background:#a0a0a0"></div>
<div style="left:1917px;top:908px;width:1px;height:6px;background:#a0a0a0"></div>
<div style="left:926px;top:914px;width:992px;height:18px;background:#f0f0f0"></div>
<svg class="a" style="left:929px;top:916px" width="13" height="16" viewBox="0 0 13 16"><path d="M6.5 1.3L11.8 7V9H8.8V14.8H4.3V9H1.2V7Z" fill="#0a5cd6" stroke="#0838b0" stroke-width="0.6"/></svg>
<div style="left:920px;top:931px;width:6px;height:1px;background:#a0a0a0"></div>
<span class="t" style="left:1391px;top:916px;font-size:11.5px;transform:scaleX(0.9446);transform-origin:0 50%;">Start Up Log</span>
<span class="t m" style="left:928.2px;top:335.2px;font-size:10.6px;letter-spacing:0.639px;">GET: DEVICE LABEL Read back previous SET</span>
<span class="t m" style="left:928.2px;top:351.2px;font-size:10.6px;color:#0000ff;letter-spacing:0.639px;">ADVISORY</span>
<span class="t m" style="left:928.2px;top:367.2px;font-size:10.6px;letter-spacing:0.639px;">Response Type of [ACK] received</span>
<span class="t m" style="left:928.2px;top:383.2px;font-size:10.6px;letter-spacing:0.639px;">        Device Label [NON Print   char]</span>
<span class="t m" style="left:928.2px;top:399.2px;font-size:10.6px;letter-spacing:0.639px;">Device Label appears to have Substrituted Printable Characters for the Non-Printable Characters</span>
<span class="t m" style="left:928.2px;top:415.2px;font-size:10.6px;letter-spacing:0.639px;">This is not recommended, although not prohibited</span>
<span class="t m" style="left:928.2px;top:442.2px;font-size:10.6px;letter-spacing:0.639px;">SET: DEVICE LABEL Data Error with 8 Bit characters [ÀÁBbCcDd]</span>
<span class="t m" style="left:928.2px;top:458.2px;font-size:10.6px;color:#0000ff;letter-spacing:0.639px;">ADVISORY</span>
<span class="t m" style="left:928.2px;top:474.2px;font-size:10.6px;color:#333;letter-spacing:0.639px;">Response Type [ACK] NOT Expected</span>
<span class="t m" style="left:928.2px;top:490.2px;font-size:10.6px;letter-spacing:0.639px;">SET:DEVICE LABEL contained one or more illegal 8 bit ASCII characters</span>
<span class="t m" style="left:928.2px;top:506.20000000000005px;font-size:10.6px;letter-spacing:0.639px;">Refer to E1.20 section 10.1, ISO/IEC 646</span>
<span class="t m" style="left:928.2px;top:522.2px;font-size:10.6px;letter-spacing:0.639px;">--- Valid Response(s):</span>
<span class="t m" style="left:928.2px;top:538.2px;font-size:10.6px;letter-spacing:0.639px;">        [NACK] with NR of [Data Out Of Range]</span>
<span class="t m" style="left:928.2px;top:565.2px;font-size:10.6px;letter-spacing:0.639px;">GET: DEVICE LABEL Read back previous SET</span>
<span class="t m" style="left:928.2px;top:581.2px;font-size:10.6px;color:#0000ff;letter-spacing:0.639px;">ADVISORY</span>
<span class="t m" style="left:928.2px;top:597.2px;font-size:10.6px;letter-spacing:0.639px;">Response Type of [ACK] received</span>
<span class="t m" style="left:928.2px;top:613.2px;font-size:10.6px;letter-spacing:0.639px;">        Device Label [ÀÁBbCcDd]</span>
<span class="t m" style="left:928.2px;top:629.2px;font-size:10.6px;letter-spacing:0.639px;">DEVICE LABEL contains one or more illegal 8 bit ASCII characters: [(0xC0)] starting at position 1</span>
<span class="t m" style="left:928.2px;top:645.2px;font-size:10.6px;letter-spacing:0.639px;">It is NOT recommended that 8 bit characters be used.</span>
<span class="t m" style="left:928.2px;top:661.2px;font-size:10.6px;letter-spacing:0.639px;">They might cause display issues in the Controller.</span>
<span class="t m" style="left:928.2px;top:677.2px;font-size:10.6px;letter-spacing:0.639px;">Refer to E1.20 section 10.1, ISO/IEC 646</span>
<span class="t m" style="left:928.2px;top:693.2px;font-size:10.6px;letter-spacing:0.639px;">Device Label is a complete match</span>
<span class="t" style="left:930.7px;top:943.6px;font-size:18px;font-weight:bold;transform:scaleX(0.9494);transform-origin:0 50%;">Statistics</span>
<div style="left:717px;top:967px;width:503px;height:48px;background:#fff;border:1px solid #a0a0a0;border-top-color:#fff;border-left-color:#fff;box-sizing:border-box"></div>
<div style="left:718px;top:968px;width:501px;height:46px;background:#fff;border:1px solid #fff;border-top-color:#a0a0a0;border-left-color:#a0a0a0;box-sizing:border-box"></div>
<div style="left:719px;top:969px;width:499px;height:24px;background:#fff"></div>
<div style="left:719px;top:993px;width:499px;height:20px;background:#cfecfd"></div>
<div style="left:818px;top:969px;width:1px;height:24px;background:#e5e5e5"></div>
<div style="left:918px;top:969px;width:1px;height:24px;background:#e5e5e5"></div>
<div style="left:1018px;top:969px;width:1px;height:24px;background:#e5e5e5"></div>
<div style="left:1118px;top:969px;width:1px;height:24px;background:#e5e5e5"></div>
<span class="t" style="left:760px;top:973px;font-size:11.5px;transform:scaleX(0.9322);transform-origin:0 50%;">Total Run</span>
<span class="t" style="left:865.2px;top:973px;font-size:11.5px;transform:scaleX(0.8968);transform-origin:0 50%;">Passed</span>
<span class="t" style="left:968px;top:973px;font-size:11.5px;transform:scaleX(0.9129);transform-origin:0 50%;">Failed</span>
<span class="t" style="left:1052.6px;top:973px;font-size:11.5px;transform:scaleX(0.9428);transform-origin:0 50%;">Warnings</span>
<span class="t" style="left:1152.8px;top:973px;font-size:11.5px;transform:scaleX(0.9197);transform-origin:0 50%;">Advisories</span>
<span class="t" style="left:755.5px;top:995px;font-size:11.5px;transform:scaleX(0.9573);transform-origin:0 50%;">6043</span>
<span class="t" style="left:855.7px;top:995px;font-size:11.5px;transform:scaleX(0.9495);transform-origin:0 50%;">6040</span>
<span class="t" style="left:964.6px;top:995px;font-size:11.5px;transform:scaleX(0.9366);transform-origin:0 50%;">0</span>
<span class="t" style="left:1064.6px;top:995px;font-size:11.5px;transform:scaleX(0.9366);transform-origin:0 50%;">0</span>
<span class="t" style="left:1165px;top:995px;font-size:11.5px;transform:scaleX(0.9366);transform-origin:0 50%;">3</span>
<svg class="a" style="left:733px;top:974px" width="15" height="13" viewBox="0 0 15 13"><path d="M0 6.5L6 0.2H7.9L9.1 2.1L10.3 0.2H12.1V3H14.2V10H12.1V12.8H10.3L9.1 10.9L7.9 12.8H6Z" fill="#0a5ad8" stroke="#0a3cb4" stroke-width="0.5"/><path d="M10.3 0.8L4.8 6.5L10.3 12.2" fill="none" stroke="#0a3cb4" stroke-width="0.9"/></svg>
<svg class="a" style="left:838px;top:974px" width="15" height="14" viewBox="0 0 15 14"><path d="M0.8 7.6L3.2 4.9L5.6 7.9L13.2 0.4L14.6 1.6L14.6 4.2L5.8 13.2L0.8 9.6Z" fill="#0a7a0a"/><path d="M1.2 7.4L3.2 5.2L5.6 8.2L13.2 0.8L14.2 1.8L5.7 10.6Z" fill="#12a812"/></svg>
<svg class="a" style="left:941px;top:975px" width="15" height="12" viewBox="0 0 15 12"><path d="M0.8 0.3H5.2L7.5 3.2L9.8 0.3H14.2L9.7 5.8L14.2 11.6H9.8L7.5 8.6L5.2 11.6H0.8L5.3 5.8Z" fill="#900000"/><path d="M1.4 0.3H5L7.5 3.4L10 0.3H13.4L8.9 5.6L13.4 10.8H10L7.5 7.8L5 10.8H1.4L5.9 5.6Z" fill="#e00000"/></svg>
<svg class="a" style="left:1025px;top:975px" width="15" height="12" viewBox="0 0 15 12"><path d="M0.8 0.3H5.2L7.5 3.2L9.8 0.3H14.2L9.7 5.8L14.2 11.6H9.8L7.5 8.6L5.2 11.6H0.8L5.3 5.8Z" fill="#b8b800"/><path d="M1.4 0.3H5L7.5 3.4L10 0.3H13.4L8.9 5.6L13.4 10.8H10L7.5 7.8L5 10.8H1.4L5.9 5.6Z" fill="#f6f600"/></svg>
<svg class="a" style="left:1125px;top:975px" width="15" height="12" viewBox="0 0 15 12"><path d="M0.8 0.3H5.2L7.5 3.2L9.8 0.3H14.2L9.7 5.8L14.2 11.6H9.8L7.5 8.6L5.2 11.6H0.8L5.3 5.8Z" fill="#083090"/><path d="M1.4 0.3H5L7.5 3.4L10 0.3H13.4L8.9 5.6L13.4 10.8H10L7.5 7.8L5 10.8H1.4L5.9 5.6Z" fill="#0a50d8"/></svg>
<div style="left:0px;top:1021px;width:1920px;height:1px;background:#d7d7d7"></div>
<div style="left:0px;top:1022px;width:1920px;height:18px;background:#f0f0f0"></div>
<div style="left:164px;top:1022px;width:1px;height:17px;background:#d7d7d7"></div>
<div style="left:364px;top:1022px;width:1px;height:17px;background:#d7d7d7"></div>
<div style="left:664px;top:1022px;width:1px;height:17px;background:#d7d7d7"></div>
<div style="left:895px;top:1022px;width:1px;height:17px;background:#d7d7d7"></div>
<div style="left:1045px;top:1022px;width:1px;height:17px;background:#d7d7d7"></div>
<span class="t" style="left:4px;top:1023px;font-size:11.5px;transform:scaleX(0.9312);transform-origin:0 50%;">Responder UID 534C:36030000</span>
<span class="t" style="left:169px;top:1023px;font-size:11.5px;transform:scaleX(0.9428);transform-origin:0 50%;">SW Ver ID: 67764743 (0x040A0207)</span>
<span class="t" style="left:369px;top:1023px;font-size:11.5px;transform:scaleX(0.9558);transform-origin:0 50%;">Personality:(2) 3-ch w/ Master</span>
</body></html>
